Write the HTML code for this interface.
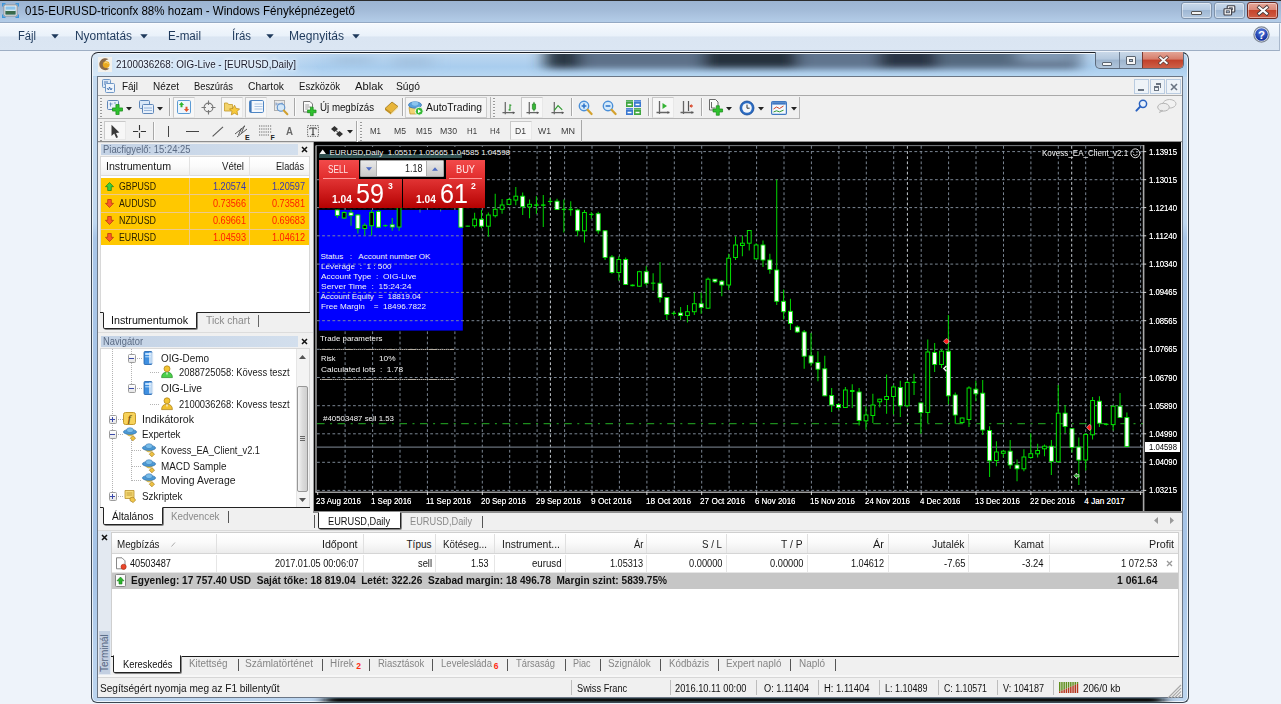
<!DOCTYPE html>
<html><head><meta charset="utf-8"><title>015-EURUSD-triconfx 88% hozam</title>
<style>
html,body{margin:0;padding:0;}
body{width:1281px;height:704px;overflow:hidden;position:relative;background:#eef3fa;font-family:"Liberation Sans",sans-serif;font-size:10px;}
div,svg{box-sizing:border-box;}
svg{position:absolute;overflow:visible;}
</style></head><body>
<div style="position:absolute;left:0px;top:0px;width:1281px;height:23px;background:linear-gradient(#9bb3d1 0%,#a2bad7 40%,#b5cee9 100%);"></div>
<div style="position:absolute;left:0px;top:22px;width:1281px;height:1px;background:#94a9c3;"></div>
<div style="position:absolute;left:0px;top:0px;width:1281px;height:1px;background:#2b2b2b;"></div>
<svg style="left:2px;top:3px" width="17" height="15" viewBox="0 0 17 15"><path d="M0.7 3.5V0.7H3.5 M13.5 0.7H16.3V3.5 M16.3 11.5V14.3H13.5 M3.5 14.3H0.7V11.5" fill="none" stroke="#3f96d9" stroke-width="1.4"/><rect x="2" y="2" width="13" height="11" rx="1.2" fill="#fafafa" stroke="#8c8c8c" stroke-width=".9"/><rect x="3.4" y="3.4" width="10.2" height="8.2" fill="#8cc3ea"/><rect x="3.4" y="7.6" width="10.2" height="4" fill="#3a6a4a"/><rect x="3.4" y="6.6" width="10.2" height="1.4" fill="#d4e9f1"/></svg>
<div style="position:absolute;top:3px;font-size:12px;line-height:16px;color:#000;white-space:pre;left:25px;transform-origin:left center;transform:scaleX(0.9645);">015-EURUSD-triconfx 88% hozam - Windows Fényképnézegető</div>
<div style="position:absolute;left:1181px;top:2px;width:31px;height:17px;background:linear-gradient(#c9d9ea 0%,#b7cbe2 45%,#9fb8d4 50%,#b4c9e0 100%);border:1px solid #7f93ab;border-radius:3px;box-shadow:inset 0 0 0 1px rgba(255,255,255,.45);"></div>
<div style="position:absolute;left:1214px;top:2px;width:31px;height:17px;background:linear-gradient(#c9d9ea 0%,#b7cbe2 45%,#9fb8d4 50%,#b4c9e0 100%);border:1px solid #7f93ab;border-radius:3px;box-shadow:inset 0 0 0 1px rgba(255,255,255,.45);"></div>
<div style="position:absolute;left:1247px;top:2px;width:31px;height:17px;background:linear-gradient(#e5a89a 0%,#d98878 45%,#c6442c 50%,#cf5e46 100%);border:1px solid #6e2a22;border-radius:3px;box-shadow:inset 0 0 0 1px rgba(255,255,255,.45);"></div>
<div style="position:absolute;left:1191px;top:11px;width:11px;height:4px;background:#f4f4f4;border:1px solid #555;border-radius:1px;"></div>
<svg style="left:1223px;top:5px" width="13" height="11" viewBox="0 0 13 11"><rect x="4.2" y="0.8" width="7.6" height="6.2" rx=".8" fill="#f6f6f6" stroke="#3c3c44" stroke-width="1.1"/><rect x="6.4" y="2.8" width="3.2" height="2" fill="#9fb6d2" stroke="#3c3c44" stroke-width=".7"/><rect x="1" y="3.8" width="7.6" height="6.2" rx=".8" fill="#f6f6f6" stroke="#3c3c44" stroke-width="1.1"/><rect x="3.2" y="5.8" width="3.2" height="2" fill="#9fb6d2" stroke="#3c3c44" stroke-width=".7"/></svg>
<svg style="left:1256.6px;top:6px" width="12" height="9" viewBox="0 0 12 9"><path d="M2.2 1.4 L9.8 7.6 M9.8 1.4 L2.2 7.6" stroke="#3f3434" stroke-width="3.6" stroke-linecap="square"/><path d="M2.2 1.4 L9.8 7.6 M9.8 1.4 L2.2 7.6" stroke="#fbfbfb" stroke-width="2.1" stroke-linecap="square"/></svg>
<div style="position:absolute;left:0px;top:23px;width:1279.5px;height:28px;background:linear-gradient(#f5f9fd 0%,#e9f1fa 47%,#dae5f2 49%,#dbe6f3 100%);border-bottom:1px solid #9eaec4;border-top:1px solid #fbfdff;border-right:1px solid #a9b8cc;"></div>
<div style="position:absolute;top:28px;font-size:12px;line-height:16px;color:#1e395b;white-space:pre;left:18px;transform-origin:left center;transform:scaleX(0.9309);">Fájl</div>
<div style="position:absolute;top:28px;font-size:12px;line-height:16px;color:#1e395b;white-space:pre;left:75px;transform-origin:left center;transform:scaleX(0.9939);">Nyomtatás</div>
<div style="position:absolute;top:28px;font-size:12px;line-height:16px;color:#1e395b;white-space:pre;left:168px;transform-origin:left center;transform:scaleX(0.9705);">E-mail</div>
<div style="position:absolute;top:28px;font-size:12px;line-height:16px;color:#1e395b;white-space:pre;left:232px;transform-origin:left center;transform:scaleX(0.9498);">Írás</div>
<div style="position:absolute;top:28px;font-size:12px;line-height:16px;color:#1e395b;white-space:pre;left:289px;transform-origin:left center;transform:scaleX(1.0056);">Megnyitás</div>
<svg style="left:51px;top:34px" width="8" height="5" viewBox="0 0 8 5"><path d="M0.3 0.3 H7.7 L4 4.6 Z" fill="#1e395b"/></svg>
<svg style="left:140px;top:34px" width="8" height="5" viewBox="0 0 8 5"><path d="M0.3 0.3 H7.7 L4 4.6 Z" fill="#1e395b"/></svg>
<svg style="left:266px;top:34px" width="8" height="5" viewBox="0 0 8 5"><path d="M0.3 0.3 H7.7 L4 4.6 Z" fill="#1e395b"/></svg>
<svg style="left:352px;top:34px" width="8" height="5" viewBox="0 0 8 5"><path d="M0.3 0.3 H7.7 L4 4.6 Z" fill="#1e395b"/></svg>
<svg style="left:1253.4px;top:26.4px" width="17" height="17" viewBox="0 0 17 17"><defs><radialGradient id="hg" cx="50%" cy="30%" r="70%"><stop offset="0" stop-color="#5b7fe0"/><stop offset="1" stop-color="#0b2a9a"/></radialGradient></defs><circle cx="8.5" cy="8.5" r="7.6" fill="#eef2f7" stroke="#7c8694" stroke-width="1.2"/><circle cx="8.5" cy="8.5" r="6.3" fill="url(#hg)"/><text x="8.5" y="12.6" text-anchor="middle" font-family="Liberation Sans" font-weight="bold" font-size="11.5" fill="#fff">?</text></svg>
<div style="position:absolute;left:91px;top:52px;width:1098px;height:650.5px;background:linear-gradient(#c6dbf0 0px,#c0d8f0 170px,#a9c6e8 185px,#a6c4e7 520px,#b8d2ee 600px,#bcd5ef 100%);border:1px solid #3c4651;border-top-color:#1c2026;border-radius:7px 7px 6px 6px;box-shadow:inset 0 0 0 1px rgba(255,255,255,.75);"></div>
<svg style="left:93px;top:698px" width="1094" height="4" viewBox="0 0 1094 4"><defs><filter id="bl2" x="-5%" y="-300%" width="110%" height="700%"><feGaussianBlur stdDeviation="7 0.5"/></filter></defs><rect x="232" y="0.2" width="838" height="3.6" fill="#070b10" filter="url(#bl2)"/></svg>
<div style="position:absolute;left:93px;top:54px;width:1094px;height:23px;background:linear-gradient(#bcd6ef 0%,#a9cdee 55%,#b9d8f3 100%);border-radius:5px 5px 0 0;"></div>
<div style="position:absolute;left:93px;top:54px;width:230px;height:22px;background:linear-gradient(90deg,rgba(255,255,255,.45),rgba(255,255,255,.35) 70%,rgba(255,255,255,0));border-radius:5px 0 0 0;"></div>
<svg style="left:93px;top:54px" width="1094" height="23" viewBox="0 0 1094 23"><defs><filter id="bl" x="-20%" y="-100%" width="140%" height="300%"><feGaussianBlur stdDeviation="8 3.2"/></filter><clipPath id="tc"><rect x="0" y="0" width="1094" height="23"/></clipPath></defs><g clip-path="url(#tc)"><g filter="url(#bl)"><rect x="452" y="-6" width="535" height="21" fill="#5d7189"/><rect x="452" y="-6" width="36" height="20" fill="#2b3745"/><rect x="610" y="-6" width="95" height="20" fill="#25303c"/><rect x="705" y="-6" width="75" height="18" fill="#61758e"/><rect x="785" y="-6" width="60" height="20" fill="#2a3644"/><rect x="850" y="-6" width="70" height="18" fill="#55697f"/><rect x="925" y="-6" width="55" height="14" fill="#8098b2"/><rect x="240" y="2" width="40" height="9" fill="#9dbbd8" opacity=".6"/><rect x="300" y="2" width="40" height="12" fill="#9dbbd8" opacity=".6"/></g></g></svg>
<svg style="left:98px;top:57px" width="14" height="15" viewBox="0 0 14 15"><rect width="14" height="15" fill="#f3f1ec"/><path d="M10.5 2.2 A6 6 0 1 0 11.5 11.5 A4.6 4.6 0 1 1 10.5 2.2Z" fill="#8a6a4a"/><circle cx="8.2" cy="7.6" r="3.4" fill="#e9a820"/><path d="M6 6 Q8 4.5 10.5 6.5" stroke="#f8d77a" stroke-width="1" fill="none"/></svg>
<div style="position:absolute;top:57px;font-size:11px;line-height:15px;color:#1b1b2a;white-space:pre;left:116px;transform-origin:left center;transform:scaleX(0.8949);text-shadow:0 0 6px #fff,0 0 4px #fff;">2100036268: OIG-Live - [EURUSD,Daily]</div>
<div style="position:absolute;left:1095px;top:52px;width:89px;height:17px;border:1px solid #5d6b7c;border-top:none;border-radius:0 0 5px 5px;overflow:hidden;background:linear-gradient(#c9d8e8 0%,#b4c8de 45%,#9db4cd 50%,#b0c5db 100%);"></div>
<div style="position:absolute;left:1142px;top:52px;width:41px;height:16px;background:linear-gradient(#e3a596 0%,#d67c6a 45%,#c2402a 50%,#cd6048 100%);border-radius:0 0 4px 0;border-left:1px solid #7a3a30;"></div>
<div style="position:absolute;left:1119px;top:52px;width:1px;height:16px;background:#6f7f93;"></div>
<div style="position:absolute;left:1102px;top:62px;width:10px;height:4px;background:#f6f6f6;border:1px solid #5a6470;border-radius:1px;"></div>
<div style="position:absolute;left:1126px;top:56px;width:10px;height:9px;background:#f6f6f6;border:1px solid #5a6470;border-radius:1px;"></div>
<div style="position:absolute;left:1129px;top:59px;width:4px;height:3px;background:#a9bdd4;border:1px solid #5a6470;"></div>
<svg style="left:1157.6px;top:56px" width="11" height="9" viewBox="0 0 11 9"><path d="M2.2 1.4 L8.8 7.2 M8.8 1.4 L2.2 7.2" stroke="#5a3a36" stroke-width="3.2" stroke-linecap="square"/><path d="M2.2 1.4 L8.8 7.2 M8.8 1.4 L2.2 7.2" stroke="#fafafa" stroke-width="1.8" stroke-linecap="square"/></svg>
<div style="position:absolute;left:97px;top:76px;width:1086px;height:622px;background:#f0f0f0;border:1px solid #6b7685;"></div>
<div style="position:absolute;left:98px;top:77px;width:1084px;height:18px;background:#f0f0f0;"></div>
<div style="position:absolute;left:98px;top:95px;width:1084px;height:1px;background:#a9a9a9;"></div>
<svg style="left:102px;top:79px" width="13" height="14" viewBox="0 0 13 14"><rect x="0.5" y="0.5" width="8" height="8" rx="1" fill="#dbe8f6" stroke="#6f97c6"/><rect x="3.5" y="4.5" width="9" height="9" rx="1" fill="#eef4fb" stroke="#6f97c6"/><path d="M5 9 l1.5 2 l1-3 l1.5 3 l1-2" stroke="#3a6cae" stroke-width=".9" fill="none"/><path d="M2 3 h4 M2 5 h1.5" stroke="#3a6cae" stroke-width=".9"/></svg>
<div style="position:absolute;top:80px;font-size:10px;line-height:13px;color:#141414;white-space:pre;left:122px;transform-origin:left center;transform:scaleX(0.9930);">Fájl</div>
<div style="position:absolute;top:80px;font-size:10px;line-height:13px;color:#141414;white-space:pre;left:153px;transform-origin:left center;transform:scaleX(0.9953);">Nézet</div>
<div style="position:absolute;top:80px;font-size:10px;line-height:13px;color:#141414;white-space:pre;left:194px;transform-origin:left center;transform:scaleX(0.9356);">Beszúrás</div>
<div style="position:absolute;top:80px;font-size:10px;line-height:13px;color:#141414;white-space:pre;left:248px;transform-origin:left center;transform:scaleX(1.0281);">Chartok</div>
<div style="position:absolute;top:80px;font-size:10px;line-height:13px;color:#141414;white-space:pre;left:299px;transform-origin:left center;transform:scaleX(0.9581);">Eszközök</div>
<div style="position:absolute;top:80px;font-size:10px;line-height:13px;color:#141414;white-space:pre;left:355px;transform-origin:left center;transform:scaleX(1.1193);">Ablak</div>
<div style="position:absolute;top:80px;font-size:10px;line-height:13px;color:#141414;white-space:pre;left:396px;transform-origin:left center;transform:scaleX(1.0276);">Súgó</div>
<div style="position:absolute;left:1134px;top:79px;width:15px;height:15px;background:#eef3f8;border:1px solid #b9cbe0;"></div>
<div style="position:absolute;left:1150px;top:79px;width:15px;height:15px;background:#eef3f8;border:1px solid #b9cbe0;"></div>
<div style="position:absolute;left:1166px;top:79px;width:15px;height:15px;background:#eef3f8;border:1px solid #b9cbe0;"></div>
<div style="position:absolute;left:1138px;top:89px;width:6px;height:2px;background:#6a7482;"></div>
<div style="position:absolute;left:1154px;top:86px;width:5px;height:5px;border:1px solid #6a7482;border-top:2px solid #6a7482;"></div>
<div style="position:absolute;left:1156px;top:83px;width:5px;height:5px;border:1px solid #6a7482;border-top:2px solid #6a7482;border-left:none;border-bottom:none;"></div>
<svg style="left:1170px;top:83px" width="8" height="8" viewBox="0 0 8 8"><path d="M1 1 L7 7 M7 1 L1 7" stroke="#6a7482" stroke-width="1.6"/></svg>
<div style="position:absolute;left:98px;top:118px;width:702px;height:1px;background:#b5b5b5;"></div>
<div style="position:absolute;left:799px;top:97px;width:1px;height:21px;background:#b5b5b5;"></div>
<div style="position:absolute;left:98px;top:141px;width:1084px;height:1px;background:#8e8e8e;"></div>
<div style="position:absolute;left:98px;top:142px;width:1084px;height:1px;background:#d9d9d9;"></div>
<div style="position:absolute;left:100px;top:98px;width:3px;height:19px;background-image:repeating-linear-gradient(#9a9a9a 0 1px,#f6f6f6 1px 2px,transparent 2px 3px);width:2px;"></div>
<svg style="left:107px;top:99px" width="16" height="17" viewBox="0 0 16 17"><rect x=".5" y="1.5" width="11" height="9" rx="1" fill="#e8f0fa" stroke="#5e86b8"/><path d="M2.5 5 h3 M3.5 3.5 v4 M7 4 h2" stroke="#5e86b8" stroke-width=".8"/><path d="M8.9 5.5 h3.2 v3.4 h3.4 v3.2 h-3.4 v3.4 h-3.2 v-3.4 h-3.4 v-3.2 h3.4Z" fill="#2fc12f" stroke="#158a15" stroke-width=".7"/></svg>
<svg style="left:126px;top:107px" width="6" height="4" viewBox="0 0 6 4"><path d="M0 0 H6 L3 3.5Z" fill="#222"/></svg>
<svg style="left:139px;top:99px" width="16" height="17" viewBox="0 0 16 17"><rect x=".5" y="1.5" width="10" height="8" rx="1" fill="#d9e7f7" stroke="#5e86b8"/><rect x="3.5" y="5.5" width="11" height="9" rx="1" fill="#e6effa" stroke="#5e86b8"/><path d="M5 9 h8 M5 11.5 h8" stroke="#7fa3d0" stroke-width=".8"/></svg>
<svg style="left:157px;top:107px" width="6" height="4" viewBox="0 0 6 4"><path d="M0 0 H6 L3 3.5Z" fill="#222"/></svg>
<div style="position:absolute;left:169px;top:98px;width:1px;height:18px;background:#a8a8a8;"></div><div style="position:absolute;left:170px;top:98px;width:1px;height:18px;background:#fbfbfb;"></div>
<div style="position:absolute;left:173px;top:97px;width:22px;height:21px;background:#f7f7f7;border:1px solid #c9c9c9;border-right-color:#e8e8e8;border-bottom-color:#e8e8e8;"></div>
<svg style="left:177px;top:100px" width="14" height="14" viewBox="0 0 14 14"><rect x=".5" y=".5" width="13" height="13" rx="1.2" fill="#eef5fc" stroke="#5b9bd5"/><path d="M4.5 2 l2.6 3 h-1.6 v2.2 h-2 v-2.2 h-1.6Z" fill="#2fb52f"/><path d="M9.5 12 l-2.6 -3 h1.6 v-2.2 h2 v2.2 h1.6Z" fill="#e2552b"/></svg>
<svg style="left:201px;top:100px" width="15" height="15" viewBox="0 0 15 15"><circle cx="7.5" cy="7.5" r="4.4" fill="none" stroke="#777" stroke-width="1.1"/><path d="M7.5 .5 v4.5 M7.5 10 v4.5 M.5 7.5 h4.5 M10 7.5 h4.5" stroke="#777" stroke-width="1.1"/></svg>
<div style="position:absolute;left:221px;top:97px;width:22px;height:21px;background:#f7f7f7;border:1px solid #c9c9c9;border-right-color:#e8e8e8;border-bottom-color:#e8e8e8;"></div>
<svg style="left:224px;top:100px" width="17" height="16" viewBox="0 0 17 16"><path d="M.5 3 v8 h8 v-6.5 h-4 l-1-1.5Z" fill="#f3d36b" stroke="#c49a2a" stroke-width=".8"/><path d="M10.5 5.2 l1.6 3.2 3.5.5 -2.5 2.5.6 3.5 -3.2-1.7 -3.2 1.7.6-3.5 -2.5-2.5 3.5-.5Z" fill="#f7c93c" stroke="#b98a1e" stroke-width=".7"/></svg>
<div style="position:absolute;left:245px;top:97px;width:22px;height:21px;background:#f7f7f7;border:1px solid #c9c9c9;border-right-color:#e8e8e8;border-bottom-color:#e8e8e8;"></div>
<svg style="left:249px;top:100px" width="15" height="14" viewBox="0 0 15 14"><rect x=".5" y=".5" width="14" height="12" rx="1.2" fill="#f4f8fd" stroke="#4f86c4"/><rect x="1" y="1" width="1.6" height="11" fill="#3f78ba"/><path d="M5.5 4 h8 M5.5 6.5 h8 M5.5 9 h8" stroke="#9db9dc" stroke-width=".8"/></svg>
<svg style="left:273px;top:99px" width="16" height="17" viewBox="0 0 16 17"><rect x="1.5" y="1.5" width="10" height="10" fill="#e8e8e8" stroke="#a0a0a0" stroke-width=".8"/><path d="M3 5 h7 M3 3.5 v3 M9 3.5 v3" stroke="#6e8fbf" stroke-width=".8"/><circle cx="8" cy="8.5" r="3.8" fill="#cfe6fa" fill-opacity=".85" stroke="#5a8fcb" stroke-width="1.1"/><path d="M10.8 11.5 l3.6 3.8" stroke="#d0a030" stroke-width="2" stroke-linecap="round"/></svg>
<div style="position:absolute;left:294px;top:98px;width:1px;height:18px;background:#a8a8a8;"></div><div style="position:absolute;left:295px;top:98px;width:1px;height:18px;background:#fbfbfb;"></div>
<svg style="left:302px;top:100.5px" width="15" height="17" viewBox="0 0 15 17"><path d="M1.5 .5 h6.5 l2.5 2.5 v8 h-9Z" fill="#fbfbfb" stroke="#6a6a6a" stroke-width=".9"/><path d="M3.2 4 h4 M3.2 6 h6 M3.2 8 h3" stroke="#8a8a8a" stroke-width=".8"/><path d="M8.440000000000001 6.15 h2.72 v2.8899999999999997 h2.8899999999999997 v2.72 h-2.8899999999999997 v2.8899999999999997 h-2.72 v-2.8899999999999997 h-2.8899999999999997 v-2.72 h2.8899999999999997Z" fill="#2fc12f" stroke="#158a15" stroke-width=".7"/></svg>
<div style="position:absolute;top:100px;font-size:10.5px;line-height:14px;color:#111;white-space:pre;left:320px;transform-origin:left center;transform:scaleX(0.9254);">Új megbízás</div>
<svg style="left:384px;top:100px" width="15" height="15" viewBox="0 0 15 15"><path d="M1 8.5 L8 2 L14 6.5 L7 13Z" fill="#e8b53a" stroke="#9c7418" stroke-width=".8"/><path d="M1 8.5 L7 13 L7 14.5 L1 10Z" fill="#c08e1c"/><path d="M7 13 L14 6.5 L14 8 L7 14.5Z" fill="#f2d78a"/></svg>
<div style="position:absolute;left:402px;top:98px;width:1px;height:18px;background:#a8a8a8;"></div><div style="position:absolute;left:403px;top:98px;width:1px;height:18px;background:#fbfbfb;"></div>
<div style="position:absolute;left:405px;top:97px;width:82px;height:21px;background:#f5f5f5;border:1px solid #cdcdcd;"></div>
<svg style="left:408px;top:100px" width="16" height="16" viewBox="0 0 16 16"><path d="M1 7.5 h12 l-1 6.5 h-10Z" fill="#f1d271" stroke="#b9922a" stroke-width=".7"/><ellipse cx="7" cy="5" rx="6.5" ry="3.2" fill="#5aa0dc" stroke="#2f6fb0" stroke-width=".7"/><ellipse cx="7" cy="3.6" rx="3.3" ry="2.1" fill="#8cc4ee"/><circle cx="11.2" cy="11.2" r="4" fill="#35b835" stroke="#fff" stroke-width=".9"/><path d="M10 9.2 l3 2 -3 2Z" fill="#fff"/></svg>
<div style="position:absolute;top:100px;font-size:10.5px;line-height:14px;color:#111;white-space:pre;left:426px;transform-origin:left center;transform:scaleX(0.9857);">AutoTrading</div>
<div style="position:absolute;left:489.5px;top:97px;width:1px;height:21px;background:#b5b5b5;"></div>
<div style="position:absolute;left:493px;top:98px;width:3px;height:19px;background-image:repeating-linear-gradient(#9a9a9a 0 1px,#f6f6f6 1px 2px,transparent 2px 3px);width:2px;"></div>
<svg style="left:502px;top:101px" width="15" height="15" viewBox="0 0 16 16"><path d="M3.5 1 v13 M.5 12.5 h13" stroke="#666" stroke-width="1.3"/><path d="M11.5 11 l2 1.5 -2 1.5Z" fill="#555"/><path d="M8.5 3.5 v7 M7 9.5 h1.5 M8.5 4.5 h1.5" stroke="#2e9a2e" stroke-width="1.2"/></svg>
<div style="position:absolute;left:521px;top:97px;width:22px;height:21px;background:#f7f7f7;border:1px solid #c9c9c9;border-right-color:#e8e8e8;border-bottom-color:#e8e8e8;"></div>
<svg style="left:526px;top:101px" width="15" height="15" viewBox="0 0 16 16"><path d="M3.5 1 v13 M.5 12.5 h13" stroke="#666" stroke-width="1.3"/><path d="M11.5 11 l2 1.5 -2 1.5Z" fill="#555"/><path d="M8.5 1 v10" stroke="#1d7a1d" stroke-width="1"/><rect x="6.8" y="3" width="3.4" height="6" rx=".8" fill="#38b838" stroke="#1d7a1d" stroke-width=".7"/></svg>
<svg style="left:550.5px;top:101px" width="15" height="15" viewBox="0 0 16 16"><path d="M3.5 1 v13 M.5 12.5 h13" stroke="#666" stroke-width="1.3"/><path d="M11.5 11 l2 1.5 -2 1.5Z" fill="#555"/><path d="M3.5 10 L7.5 5 L12 9.5" stroke="#2e9a2e" stroke-width="1.2" fill="none"/></svg>
<div style="position:absolute;left:571px;top:98px;width:1px;height:18px;background:#a8a8a8;"></div><div style="position:absolute;left:572px;top:98px;width:1px;height:18px;background:#fbfbfb;"></div>
<svg style="left:578px;top:100px" width="15" height="16" viewBox="0 0 15 16"><circle cx="6" cy="6" r="4.7" fill="#d6ebfb" stroke="#4a8fd8" stroke-width="1.4"/><path d="M9.6 9.8 l4 4.2" stroke="#d3a12e" stroke-width="2.2" stroke-linecap="round"/><path d="M3.6 6 h4.8" stroke="#2a72c8" stroke-width="1.5"/><path d="M6 3.6 v4.8" stroke="#2a72c8" stroke-width="1.5"/></svg>
<svg style="left:602px;top:100px" width="15" height="16" viewBox="0 0 15 16"><circle cx="6" cy="6" r="4.7" fill="#d6ebfb" stroke="#4a8fd8" stroke-width="1.4"/><path d="M9.6 9.8 l4 4.2" stroke="#d3a12e" stroke-width="2.2" stroke-linecap="round"/><path d="M3.6 6 h4.8" stroke="#2a72c8" stroke-width="1.5"/></svg>
<svg style="left:626px;top:100px" width="15" height="15" viewBox="0 0 15 15"><rect x="0" y="0" width="7" height="7" fill="#3fa63f"/><rect x="8" y="0" width="7" height="7" fill="#3b78d0"/><rect x="0" y="8" width="7" height="7" fill="#3b78d0"/><rect x="8" y="8" width="7" height="7" fill="#3fa63f"/><path d="M1.5 4.5 h4 M9.5 4.5 h4 M1.5 12.5 h4 M9.5 12.5 h4" stroke="#fff" stroke-width="1.6"/><path d="M0 1.2 h7 M8 1.2 h7 M0 9.2 h7 M8 9.2 h7" stroke="#cfe0f5" stroke-width=".9" opacity=".6"/></svg>
<div style="position:absolute;left:648px;top:98px;width:1px;height:18px;background:#a8a8a8;"></div><div style="position:absolute;left:649px;top:98px;width:1px;height:18px;background:#fbfbfb;"></div>
<div style="position:absolute;left:652px;top:97px;width:22px;height:21px;background:#f7f7f7;border:1px solid #c9c9c9;border-right-color:#e8e8e8;border-bottom-color:#e8e8e8;"></div>
<svg style="left:656px;top:100px" width="16" height="16" viewBox="0 0 16 16"><path d="M3.5 1 v13 M.5 12.5 h13" stroke="#666" stroke-width="1.3"/><path d="M11.5 11 l2 1.5 -2 1.5Z" fill="#555"/><path d="M6.5 3 l4.5 3 -4.5 3Z" fill="#35b335"/></svg>
<svg style="left:680px;top:100px" width="16" height="16" viewBox="0 0 16 16"><path d="M3.5 1 v13 M.5 12.5 h13" stroke="#666" stroke-width="1.3"/><path d="M11.5 11 l2 1.5 -2 1.5Z" fill="#555"/><path d="M8.5 1 v10" stroke="#555" stroke-width="1.2"/><path d="M13 6 h-3" stroke="#d8482a" stroke-width="1.2"/><path d="M9.3 6 l2.4 -2 v4Z" fill="#d8482a"/></svg>
<div style="position:absolute;left:701px;top:98px;width:1px;height:18px;background:#a8a8a8;"></div><div style="position:absolute;left:702px;top:98px;width:1px;height:18px;background:#fbfbfb;"></div>
<svg style="left:708px;top:99px" width="16" height="17" viewBox="0 0 16 17"><path d="M1.5 .5 h6 l2.5 2.5 v8 h-8.5Z" fill="#fbfbfb" stroke="#5a5a5a" stroke-width=".9"/><path d="M3.5 3 v6 h4" stroke="#5a5a5a" stroke-width=".9" fill="none"/><path d="M8.280000000000001 6.75 h3.04 v3.23 h3.23 v3.04 h-3.23 v3.23 h-3.04 v-3.23 h-3.23 v-3.04 h3.23Z" fill="#2fc12f" stroke="#158a15" stroke-width=".7"/></svg>
<svg style="left:726px;top:107px" width="6" height="4" viewBox="0 0 6 4"><path d="M0 0 H6 L3 3.5Z" fill="#222"/></svg>
<svg style="left:739px;top:100px" width="16" height="16" viewBox="0 0 16 16"><circle cx="8" cy="8" r="7" fill="#2a6cc4" stroke="#174a96" stroke-width=".8"/><circle cx="8" cy="8" r="4.8" fill="#f2f6fb"/><path d="M8 4.6 v3.6 h2.6" stroke="#333" stroke-width="1" fill="none"/></svg>
<svg style="left:758px;top:107px" width="6" height="4" viewBox="0 0 6 4"><path d="M0 0 H6 L3 3.5Z" fill="#222"/></svg>
<svg style="left:771px;top:101px" width="16" height="14" viewBox="0 0 16 14"><rect x=".6" y=".6" width="14.8" height="12.8" rx="1.2" fill="#f4f8fd" stroke="#3f78c2" stroke-width="1.2"/><rect x="1.2" y="1.2" width="13.6" height="2.4" fill="#3f78c2"/><path d="M2.5 8 l3-2 3 1.5 4-2.5" stroke="#d0462a" stroke-width="1" fill="none"/><path d="M2.5 11 l3-1.2 3 1 4-1.6" stroke="#2e9a2e" stroke-width="1" fill="none"/></svg>
<svg style="left:791px;top:107px" width="6" height="4" viewBox="0 0 6 4"><path d="M0 0 H6 L3 3.5Z" fill="#222"/></svg>
<svg style="left:1135px;top:99px" width="13" height="13" viewBox="0 0 13 13"><circle cx="8" cy="4.8" r="3.6" fill="#e8f1fc" stroke="#2a62c0" stroke-width="1.5"/><path d="M5.4 7.4 l-4 4.2" stroke="#2a62c0" stroke-width="2" stroke-linecap="round"/></svg>
<svg style="left:1157px;top:99px" width="20" height="14" viewBox="0 0 20 14"><ellipse cx="12.5" cy="4.8" rx="6.5" ry="4.3" fill="#f2f2f2" stroke="#b4b4b4" stroke-width=".9"/><ellipse cx="6.5" cy="8.2" rx="5.8" ry="3.9" fill="#ececec" stroke="#aaa" stroke-width=".9"/><path d="M4 11.2 l-1.6 2.4 3.4 -1.8Z" fill="#ececec" stroke="#aaa" stroke-width=".7"/></svg>
<div style="position:absolute;left:100px;top:121.8px;width:3px;height:19px;background-image:repeating-linear-gradient(#9a9a9a 0 1px,#f6f6f6 1px 2px,transparent 2px 3px);width:2px;"></div>
<div style="position:absolute;left:104px;top:120.8px;width:22px;height:19.6px;background:#f7f7f7;border:1px solid #c9c9c9;border-right-color:#e8e8e8;border-bottom-color:#e8e8e8;"></div>
<svg style="left:110px;top:123.8px" width="10" height="15" viewBox="0 0 10 15"><path d="M1.5 .8 v11.2 l2.7-2.4 2 4.4 1.8-.8 -2-4.3 3.4-.3Z" fill="#3a3a3a"/></svg>
<svg style="left:133px;top:124.8px" width="13" height="13" viewBox="0 0 13 13"><path d="M6.5 0 v5.2 M6.5 7.8 v5.2 M0 6.5 h5.2 M7.8 6.5 h5.2" stroke="#333" stroke-width="1.1"/></svg>
<div style="position:absolute;left:153px;top:121.8px;width:1px;height:18px;background:#a8a8a8;"></div><div style="position:absolute;left:154px;top:121.8px;width:1px;height:18px;background:#fbfbfb;"></div>
<div style="position:absolute;left:168px;top:125.8px;width:1px;height:11px;background:#444;"></div>
<div style="position:absolute;left:186px;top:130.8px;width:13px;height:1px;background:#444;"></div>
<svg style="left:212px;top:125.8px" width="12" height="11" viewBox="0 0 12 11"><path d="M.6 10.4 L11 .8" stroke="#555" stroke-width="1.1"/></svg>
<svg style="left:233.5px;top:123.8px" width="16" height="16" viewBox="0 0 16 16"><path d="M1 10 L11 2 M3 13 L13 5 M4.5 11 l3-7 M7.5 8.6 l3-7" stroke="#555" stroke-width="1"/><text x="11" y="15.5" font-size="7" font-family="Liberation Sans" font-weight="bold" fill="#222">E</text></svg>
<svg style="left:258.5px;top:123.8px" width="17" height="16" viewBox="0 0 17 16"><path d="M0 2 h13 M0 5 h13 M0 8 h13 M0 11 h10" stroke="#666" stroke-width="1" stroke-dasharray="1.2 1"/><text x="11.5" y="15.5" font-size="7" font-family="Liberation Sans" font-weight="bold" fill="#222">F</text></svg>
<div style="position:absolute;top:125.3px;font-size:10px;line-height:13px;color:#6a6a6a;white-space:pre;font-weight:bold;left:285.5px;transform-origin:left center;transform:scaleX(0.9693);">A</div>
<svg style="left:306.5px;top:125.3px" width="12" height="12" viewBox="0 0 12 12"><rect x=".6" y=".6" width="10.8" height="10.8" fill="none" stroke="#555" stroke-width=".9" stroke-dasharray="1.3 1.1"/><path d="M2.8 3 h6.4 M6 3 v6.6 M4.6 9.6 h2.8 M2.8 3 v1.3 M9.2 3 v1.3" stroke="#444" stroke-width="1.2"/></svg>
<svg style="left:330px;top:124.8px" width="14" height="13" viewBox="0 0 14 13"><path d="M1 4 l3.5-3 3.5 3 -3.5 3Z M6 9 l3.5-3 3.5 3 -3.5 3Z" fill="#333"/><path d="M3 3 L11 10" stroke="#333" stroke-width=".9"/></svg>
<svg style="left:347px;top:129.8px" width="6" height="4" viewBox="0 0 6 4"><path d="M0 0 H6 L3 3.5Z" fill="#222"/></svg>
<div style="position:absolute;left:356px;top:120.8px;width:1px;height:21px;background:#a8a8a8;"></div>
<div style="position:absolute;left:357px;top:120.8px;width:1px;height:21px;background:#fbfbfb;"></div>
<div style="position:absolute;left:360px;top:121.8px;width:3px;height:19px;background-image:repeating-linear-gradient(#9a9a9a 0 1px,#f6f6f6 1px 2px,transparent 2px 3px);width:2px;"></div>
<div style="position:absolute;top:125.8px;font-size:8.5px;line-height:11px;color:#3c3c3c;white-space:pre;left:370px;transform-origin:left center;transform:scaleX(0.9316);">M1</div>
<div style="position:absolute;top:125.8px;font-size:8.5px;line-height:11px;color:#3c3c3c;white-space:pre;left:394px;transform-origin:left center;transform:scaleX(1.0163);">M5</div>
<div style="position:absolute;top:125.8px;font-size:8.5px;line-height:11px;color:#3c3c3c;white-space:pre;left:416px;transform-origin:left center;transform:scaleX(0.9676);">M15</div>
<div style="position:absolute;top:125.8px;font-size:8.5px;line-height:11px;color:#3c3c3c;white-space:pre;left:440px;transform-origin:left center;transform:scaleX(1.0281);">M30</div>
<div style="position:absolute;top:125.8px;font-size:8.5px;line-height:11px;color:#3c3c3c;white-space:pre;left:467px;transform-origin:left center;transform:scaleX(0.9203);">H1</div>
<div style="position:absolute;top:125.8px;font-size:8.5px;line-height:11px;color:#3c3c3c;white-space:pre;left:490px;transform-origin:left center;transform:scaleX(0.9203);">H4</div>
<div style="position:absolute;top:125.8px;font-size:8.5px;line-height:11px;color:#3c3c3c;white-space:pre;left:538px;transform-origin:left center;transform:scaleX(1.0196);">W1</div>
<div style="position:absolute;top:125.8px;font-size:8.5px;line-height:11px;color:#3c3c3c;white-space:pre;left:561px;transform-origin:left center;transform:scaleX(1.0591);">MN</div>
<div style="position:absolute;left:510px;top:120.8px;width:22px;height:19.6px;background:#f7f7f7;border:1px solid #c9c9c9;border-right-color:#e8e8e8;border-bottom-color:#e8e8e8;"></div>
<div style="position:absolute;top:125.8px;font-size:8.5px;line-height:11px;color:#3c3c3c;white-space:pre;left:515px;transform-origin:left center;transform:scaleX(1.0124);">D1</div>
<div style="position:absolute;left:581px;top:119.8px;width:1px;height:22px;background:#a8a8a8;"></div>
<div style="position:absolute;left:98px;top:143px;width:215px;height:189px;background:#f0f0f0;"></div>
<div style="position:absolute;left:101px;top:144px;width:197px;height:11px;background:linear-gradient(90deg,#c3d2e5,#d3dfed);"></div>
<div style="position:absolute;top:142.6px;font-size:10px;line-height:13px;color:#5b6b84;white-space:pre;left:102.6px;transform-origin:left center;transform:scaleX(0.9425);">Piacfigyelő: 15:24:25</div>
<svg style="left:301px;top:146px" width="7" height="7" viewBox="0 0 7 7"><path d="M1 1 L6 6 M6 1 L1 6" stroke="#111" stroke-width="1.5"/></svg>
<div style="position:absolute;left:100px;top:156px;width:210px;height:157px;background:#fff;border:1px solid #d8d8d8;border-bottom:none;"></div>
<div style="position:absolute;left:101px;top:157px;width:208px;height:19px;background:linear-gradient(#ffffff 0%,#fbfbfb 50%,#efefef 100%);border-bottom:1px solid #dcdcdc;"></div>
<div style="position:absolute;left:189px;top:157px;width:1px;height:19px;background:#e2e2e2;"></div>
<div style="position:absolute;left:249px;top:157px;width:1px;height:19px;background:#e2e2e2;"></div>
<div style="position:absolute;top:160px;font-size:10px;line-height:13px;color:#1a1a1a;white-space:pre;left:106px;transform-origin:left center;transform:scaleX(1.0633);">Instrumentum</div>
<div style="position:absolute;top:160px;font-size:10px;line-height:13px;color:#1a1a1a;white-space:pre;left:222px;transform-origin:left center;transform:scaleX(0.9652);">Vétel</div>
<div style="position:absolute;top:160px;font-size:10px;line-height:13px;color:#1a1a1a;white-space:pre;left:276px;transform-origin:left center;transform:scaleX(0.9157);">Eladás</div>
<div style="position:absolute;left:101px;top:177.8px;width:208px;height:67.7px;background:#ffc800;"></div>
<svg style="left:105px;top:182px" width="9" height="9" viewBox="0 0 9 9"><path d="M4.5 .5 L8.5 4.7 H6.3 V8.5 H2.7 V4.7 H.5Z" fill="#3fcf3f" stroke="#1f8a1f" stroke-width=".8"/></svg>
<div style="position:absolute;top:180px;font-size:10px;line-height:13px;color:#2a2000;white-space:pre;left:119px;transform-origin:left center;transform:scaleX(0.8761);">GBPUSD</div>
<div style="position:absolute;top:180px;font-size:10px;line-height:13px;color:#3838b0;white-space:pre;left:212.5px;transform-origin:left center;transform:scaleX(0.9129);">1.20574</div>
<div style="position:absolute;top:180px;font-size:10px;line-height:13px;color:#3838b0;white-space:pre;left:272px;transform-origin:left center;transform:scaleX(0.9129);">1.20597</div>
<div style="position:absolute;left:101px;top:194.4px;width:208px;height:1px;background:#ecc98c;"></div>
<svg style="left:105px;top:199px" width="9" height="9" viewBox="0 0 9 9"><path d="M4.5 8.5 L8.5 4.3 H6.3 V.5 H2.7 V4.3 H.5Z" fill="#ff5a2a" stroke="#b83a10" stroke-width=".8"/></svg>
<div style="position:absolute;top:197px;font-size:10px;line-height:13px;color:#2a2000;white-space:pre;left:119px;transform-origin:left center;transform:scaleX(0.8762);">AUDUSD</div>
<div style="position:absolute;top:197px;font-size:10px;line-height:13px;color:#ff2000;white-space:pre;left:212.5px;transform-origin:left center;transform:scaleX(0.9129);">0.73566</div>
<div style="position:absolute;top:197px;font-size:10px;line-height:13px;color:#ff2000;white-space:pre;left:272px;transform-origin:left center;transform:scaleX(0.9129);">0.73581</div>
<div style="position:absolute;left:101px;top:211.70000000000002px;width:208px;height:1px;background:#ecc98c;"></div>
<svg style="left:105px;top:216.3px" width="9" height="9" viewBox="0 0 9 9"><path d="M4.5 8.5 L8.5 4.3 H6.3 V.5 H2.7 V4.3 H.5Z" fill="#ff5a2a" stroke="#b83a10" stroke-width=".8"/></svg>
<div style="position:absolute;top:214.3px;font-size:10px;line-height:13px;color:#2a2000;white-space:pre;left:119px;transform-origin:left center;transform:scaleX(0.8880);">NZDUSD</div>
<div style="position:absolute;top:214.3px;font-size:10px;line-height:13px;color:#ff2000;white-space:pre;left:212.5px;transform-origin:left center;transform:scaleX(0.9129);">0.69661</div>
<div style="position:absolute;top:214.3px;font-size:10px;line-height:13px;color:#ff2000;white-space:pre;left:272px;transform-origin:left center;transform:scaleX(0.9129);">0.69683</div>
<div style="position:absolute;left:101px;top:228.8px;width:208px;height:1px;background:#ecc98c;"></div>
<svg style="left:105px;top:233.4px" width="9" height="9" viewBox="0 0 9 9"><path d="M4.5 8.5 L8.5 4.3 H6.3 V.5 H2.7 V4.3 H.5Z" fill="#ff5a2a" stroke="#b83a10" stroke-width=".8"/></svg>
<div style="position:absolute;top:231.4px;font-size:10px;line-height:13px;color:#2a2000;white-space:pre;left:119px;transform-origin:left center;transform:scaleX(0.8762);">EURUSD</div>
<div style="position:absolute;top:231.4px;font-size:10px;line-height:13px;color:#ff2000;white-space:pre;left:212.5px;transform-origin:left center;transform:scaleX(0.9129);">1.04593</div>
<div style="position:absolute;top:231.4px;font-size:10px;line-height:13px;color:#ff2000;white-space:pre;left:272px;transform-origin:left center;transform:scaleX(0.9129);">1.04612</div>
<div style="position:absolute;left:189px;top:177.8px;width:1px;height:67.7px;background:#ecc98c;"></div>
<div style="position:absolute;left:249px;top:177.8px;width:1px;height:67.7px;background:#ecc98c;"></div>
<div style="position:absolute;left:100px;top:312px;width:210px;height:1px;background:#222;"></div>
<div style="position:absolute;left:103px;top:312px;width:94px;height:17px;background:#fff;border:1px solid #222;border-top:1px solid #fff;border-radius:0 0 2px 2px;box-shadow:1px 1px 0 #888;"></div>
<div style="position:absolute;top:314px;font-size:10px;line-height:13px;color:#111;white-space:pre;left:111px;transform-origin:left center;transform:scaleX(1.0740);">Instrumentumok</div>
<div style="position:absolute;top:314px;font-size:10px;line-height:13px;color:#8a8a8a;white-space:pre;left:205.5px;transform-origin:left center;transform:scaleX(1.0240);">Tick chart</div>
<div style="position:absolute;left:258px;top:315px;width:1px;height:12px;background:#666;"></div>
<div style="position:absolute;left:98px;top:333px;width:215px;height:197px;background:#f0f0f0;"></div>
<div style="position:absolute;left:98px;top:332px;width:215px;height:1px;background:#dcdcdc;"></div>
<div style="position:absolute;left:101px;top:336px;width:197px;height:11px;background:linear-gradient(90deg,#c3d2e5,#d3dfed);"></div>
<div style="position:absolute;top:334.8px;font-size:10px;line-height:13px;color:#5b6b84;white-space:pre;left:102.6px;transform-origin:left center;transform:scaleX(0.9346);">Navigátor</div>
<svg style="left:301px;top:338px" width="7" height="7" viewBox="0 0 7 7"><path d="M1 1 L6 6 M6 1 L1 6" stroke="#111" stroke-width="1.5"/></svg>
<div style="position:absolute;left:100px;top:348px;width:210px;height:160px;background:#fff;border:1px solid #d8d8d8;border-bottom:none;"></div>
<div style="position:absolute;left:296px;top:349px;width:13px;height:158px;background:#f3f3f3;border-left:1px solid #e6e6e6;"></div>
<div style="position:absolute;left:297px;top:386px;width:11px;height:106px;background:linear-gradient(90deg,#f4f4f4,#dcdcdc 50%,#cfcfcf);border:1px solid #979797;border-radius:2px;"></div>
<div style="position:absolute;left:300px;top:436px;width:5px;height:1px;background:#666;"></div><div style="position:absolute;left:300px;top:438px;width:5px;height:1px;background:#666;"></div><div style="position:absolute;left:300px;top:440px;width:5px;height:1px;background:#666;"></div>
<svg style="left:299px;top:355px" width="7" height="4" viewBox="0 0 7 4"><path d="M0 4 L3.5 0 L7 4Z" fill="#555"/></svg>
<svg style="left:299px;top:498px" width="7" height="4" viewBox="0 0 7 4"><path d="M0 0 L3.5 4 L7 0Z" fill="#555"/></svg>
<div style="position:absolute;left:112px;top:349px;width:1px;height:148px;background-image:repeating-linear-gradient(#b4b4b4 0 1px,transparent 1px 2px);"></div>
<div style="position:absolute;left:131px;top:349px;width:1px;height:40px;background-image:repeating-linear-gradient(#b4b4b4 0 1px,transparent 1px 2px);"></div>
<div style="position:absolute;left:131px;top:440px;width:1px;height:41px;background-image:repeating-linear-gradient(#b4b4b4 0 1px,transparent 1px 2px);"></div>
<div style="position:absolute;left:131px;top:358px;width:11px;height:1px;background-image:repeating-linear-gradient(90deg,#b4b4b4 0 1px,transparent 1px 2px);"></div>
<div style="position:absolute;left:127.6px;top:354.4px;width:8.4px;height:8.4px;background:linear-gradient(#fff,#e6e6e6);border:1px solid #9c9c9c;border-radius:1.5px;"></div><div style="position:absolute;left:129px;top:358px;width:5px;height:1px;background:#3c4aa8;"></div>
<svg style="left:143px;top:351px" width="11" height="14" viewBox="0 0 11 14"><rect x="1" y=".5" width="8" height="13" rx="1" fill="#3f8fe0" stroke="#1f5fa8" stroke-width=".8"/><rect x="2.2" y="2" width="5.6" height="2" fill="#bfe0ff"/><rect x="2.2" y="5" width="5.6" height="1.4" fill="#9ccbf5"/><rect x="6" y="1.5" width="4.5" height="11" fill="#e9f3fc" opacity=".75"/></svg>
<div style="position:absolute;top:352px;font-size:10px;line-height:13px;color:#1a1a1a;white-space:pre;left:161px;transform-origin:left center;transform:scaleX(0.9930);">OIG-Demo</div>
<div style="position:absolute;left:150px;top:372px;width:10px;height:1px;background-image:repeating-linear-gradient(90deg,#b4b4b4 0 1px,transparent 1px 2px);"></div>
<svg style="left:161px;top:365px" width="12" height="13" viewBox="0 0 12 13"><path d="M.6 12.6 q0-5.4 5.4-5.4 q5.4 0 5.4 5.4Z" fill="#4bd04b" stroke="#1f8a1f" stroke-width=".7"/><circle cx="6" cy="3.8" r="3" fill="#f3c433" stroke="#a97c10" stroke-width=".7"/><path d="M5 7.4 l1 3 1-3Z" fill="#fff" opacity=".8"/></svg>
<div style="position:absolute;top:366px;font-size:10px;line-height:13px;color:#1a1a1a;white-space:pre;left:178.5px;transform-origin:left center;transform:scaleX(0.9375);">2088725058: Kövess teszt</div>
<div style="position:absolute;left:131px;top:388px;width:11px;height:1px;background-image:repeating-linear-gradient(90deg,#b4b4b4 0 1px,transparent 1px 2px);"></div>
<div style="position:absolute;left:127.6px;top:384.4px;width:8.4px;height:8.4px;background:linear-gradient(#fff,#e6e6e6);border:1px solid #9c9c9c;border-radius:1.5px;"></div><div style="position:absolute;left:129px;top:388px;width:5px;height:1px;background:#3c4aa8;"></div>
<svg style="left:143px;top:381px" width="11" height="14" viewBox="0 0 11 14"><rect x="1" y=".5" width="8" height="13" rx="1" fill="#3f8fe0" stroke="#1f5fa8" stroke-width=".8"/><rect x="2.2" y="2" width="5.6" height="2" fill="#bfe0ff"/><rect x="2.2" y="5" width="5.6" height="1.4" fill="#9ccbf5"/><rect x="6" y="1.5" width="4.5" height="11" fill="#e9f3fc" opacity=".75"/></svg>
<div style="position:absolute;top:382px;font-size:10px;line-height:13px;color:#1a1a1a;white-space:pre;left:161px;transform-origin:left center;transform:scaleX(1.0247);">OIG-Live</div>
<div style="position:absolute;left:150px;top:404px;width:10px;height:1px;background-image:repeating-linear-gradient(90deg,#b4b4b4 0 1px,transparent 1px 2px);"></div>
<svg style="left:161px;top:397px" width="12" height="13" viewBox="0 0 12 13"><path d="M.6 12.6 q0-5.4 5.4-5.4 q5.4 0 5.4 5.4Z" fill="#f0c030" stroke="#a97c10" stroke-width=".7"/><circle cx="6" cy="3.8" r="3" fill="#f3c433" stroke="#a97c10" stroke-width=".7"/><path d="M5 7.4 l1 3 1-3Z" fill="#fff" opacity=".8"/></svg>
<div style="position:absolute;top:398px;font-size:10px;line-height:13px;color:#1a1a1a;white-space:pre;left:178.5px;transform-origin:left center;transform:scaleX(0.9375);">2100036268: Kovess teszt</div>
<div style="position:absolute;left:112px;top:419px;width:11px;height:1px;background-image:repeating-linear-gradient(90deg,#b4b4b4 0 1px,transparent 1px 2px);"></div>
<div style="position:absolute;left:108.6px;top:415.4px;width:8.4px;height:8.4px;background:linear-gradient(#fff,#e6e6e6);border:1px solid #9c9c9c;border-radius:1.5px;"></div><div style="position:absolute;left:110px;top:419px;width:5px;height:1px;background:#3c4aa8;"></div><div style="position:absolute;left:112px;top:417px;width:1px;height:5px;background:#3c4aa8;"></div>
<svg style="left:123px;top:412px" width="13" height="13" viewBox="0 0 13 13"><rect x=".5" y=".5" width="12" height="12" rx="2" fill="#f7d25a" stroke="#c49a2a"/><text x="6.5" y="10" text-anchor="middle" font-family="Liberation Serif" font-style="italic" font-weight="bold" font-size="10" fill="#7a5a10">f</text></svg>
<div style="position:absolute;top:413px;font-size:10px;line-height:13px;color:#1a1a1a;white-space:pre;left:142px;transform-origin:left center;transform:scaleX(1.0630);">Indikátorok</div>
<div style="position:absolute;left:112px;top:434px;width:11px;height:1px;background-image:repeating-linear-gradient(90deg,#b4b4b4 0 1px,transparent 1px 2px);"></div>
<div style="position:absolute;left:108.6px;top:430.4px;width:8.4px;height:8.4px;background:linear-gradient(#fff,#e6e6e6);border:1px solid #9c9c9c;border-radius:1.5px;"></div><div style="position:absolute;left:110px;top:434px;width:5px;height:1px;background:#3c4aa8;"></div>
<svg style="left:123px;top:427px" width="14" height="14" viewBox="0 0 14 14"><path d="M2.4 5.8 Q7 12.4 11.6 5.8Z" fill="#f4c93a" stroke="#b08a1c" stroke-width=".5"/><ellipse cx="7" cy="4.9" rx="6.6" ry="2.5" fill="#4a9ad6" stroke="#2c6aa8" stroke-width=".6"/><ellipse cx="7" cy="3.2" rx="3.5" ry="2.5" fill="#79bdea" stroke="#2c6aa8" stroke-width=".5"/><path d="M9.8 8.6 l2.7 2.5 -2.5 2.7 -2.7-2.5Z" fill="#efc242" stroke="#a9801c" stroke-width=".7"/></svg>
<div style="position:absolute;top:428px;font-size:10px;line-height:13px;color:#1a1a1a;white-space:pre;left:142px;transform-origin:left center;transform:scaleX(0.9756);">Expertek</div>
<div style="position:absolute;left:132px;top:450px;width:10px;height:1px;background-image:repeating-linear-gradient(90deg,#b4b4b4 0 1px,transparent 1px 2px);"></div>
<svg style="left:142px;top:443px" width="14" height="14" viewBox="0 0 14 14"><path d="M2.4 5.8 Q7 12.4 11.6 5.8Z" fill="#f4c93a" stroke="#b08a1c" stroke-width=".5"/><ellipse cx="7" cy="4.9" rx="6.6" ry="2.5" fill="#4a9ad6" stroke="#2c6aa8" stroke-width=".6"/><ellipse cx="7" cy="3.2" rx="3.5" ry="2.5" fill="#79bdea" stroke="#2c6aa8" stroke-width=".5"/><path d="M9.8 8.6 l2.7 2.5 -2.5 2.7 -2.7-2.5Z" fill="#efc242" stroke="#a9801c" stroke-width=".7"/></svg>
<div style="position:absolute;top:444px;font-size:10px;line-height:13px;color:#1a1a1a;white-space:pre;left:161px;transform-origin:left center;transform:scaleX(0.9228);">Kovess_EA_Client_v2.1</div>
<div style="position:absolute;left:132px;top:466px;width:10px;height:1px;background-image:repeating-linear-gradient(90deg,#b4b4b4 0 1px,transparent 1px 2px);"></div>
<svg style="left:142px;top:459px" width="14" height="14" viewBox="0 0 14 14"><path d="M2.4 5.8 Q7 12.4 11.6 5.8Z" fill="#f4c93a" stroke="#b08a1c" stroke-width=".5"/><ellipse cx="7" cy="4.9" rx="6.6" ry="2.5" fill="#4a9ad6" stroke="#2c6aa8" stroke-width=".6"/><ellipse cx="7" cy="3.2" rx="3.5" ry="2.5" fill="#79bdea" stroke="#2c6aa8" stroke-width=".5"/><path d="M9.8 8.6 l2.7 2.5 -2.5 2.7 -2.7-2.5Z" fill="#efc242" stroke="#a9801c" stroke-width=".7"/></svg>
<div style="position:absolute;top:460px;font-size:10px;line-height:13px;color:#1a1a1a;white-space:pre;left:161px;transform-origin:left center;transform:scaleX(0.9905);">MACD Sample</div>
<div style="position:absolute;left:132px;top:480px;width:10px;height:1px;background-image:repeating-linear-gradient(90deg,#b4b4b4 0 1px,transparent 1px 2px);"></div>
<svg style="left:142px;top:473px" width="14" height="14" viewBox="0 0 14 14"><path d="M2.4 5.8 Q7 12.4 11.6 5.8Z" fill="#f4c93a" stroke="#b08a1c" stroke-width=".5"/><ellipse cx="7" cy="4.9" rx="6.6" ry="2.5" fill="#4a9ad6" stroke="#2c6aa8" stroke-width=".6"/><ellipse cx="7" cy="3.2" rx="3.5" ry="2.5" fill="#79bdea" stroke="#2c6aa8" stroke-width=".5"/><path d="M9.8 8.6 l2.7 2.5 -2.5 2.7 -2.7-2.5Z" fill="#efc242" stroke="#a9801c" stroke-width=".7"/></svg>
<div style="position:absolute;top:474px;font-size:10px;line-height:13px;color:#1a1a1a;white-space:pre;left:161px;transform-origin:left center;transform:scaleX(1.0415);">Moving Average</div>
<div style="position:absolute;left:112px;top:496px;width:11px;height:1px;background-image:repeating-linear-gradient(90deg,#b4b4b4 0 1px,transparent 1px 2px);"></div>
<div style="position:absolute;left:108.6px;top:492.4px;width:8.4px;height:8.4px;background:linear-gradient(#fff,#e6e6e6);border:1px solid #9c9c9c;border-radius:1.5px;"></div><div style="position:absolute;left:110px;top:496px;width:5px;height:1px;background:#3c4aa8;"></div><div style="position:absolute;left:112px;top:494px;width:1px;height:5px;background:#3c4aa8;"></div>
<svg style="left:123px;top:489px" width="14" height="14" viewBox="0 0 14 14"><path d="M2 1.5 h9 v8 h-9Z" fill="#f7dc7a" stroke="#b9912a" stroke-width=".8"/><path d="M3.5 4 h6 M3.5 6 h6" stroke="#b9912a" stroke-width=".8"/><path d="M7 9 l3 -1 2.6 3 -2.4 2.6 -3.2-2Z" fill="#f0c64a" stroke="#a9801c" stroke-width=".7"/></svg>
<div style="position:absolute;top:490px;font-size:10px;line-height:13px;color:#1a1a1a;white-space:pre;left:142px;transform-origin:left center;transform:scaleX(0.9848);">Szkriptek</div>
<div style="position:absolute;left:100px;top:507px;width:210px;height:1px;background:#222;"></div>
<div style="position:absolute;left:103px;top:507px;width:60px;height:18px;background:#fff;border:1px solid #222;border-top:1px solid #fff;border-radius:0 0 2px 2px;box-shadow:1px 1px 0 #888;"></div>
<div style="position:absolute;top:510px;font-size:10px;line-height:13px;color:#111;white-space:pre;left:112px;transform-origin:left center;transform:scaleX(1.0088);">Általános</div>
<div style="position:absolute;top:510px;font-size:10px;line-height:13px;color:#8a8a8a;white-space:pre;left:171px;transform-origin:left center;transform:scaleX(0.9802);">Kedvencek</div>
<div style="position:absolute;left:228px;top:511px;width:1px;height:12px;background:#555;"></div>
<div style="position:absolute;left:313px;top:142px;width:867.5px;height:369px;background:#000;border-left:1px solid #9a9a9a;"></div>
<svg style="left:0;top:0" width="1281" height="704" viewBox="0 0 1281 704" shape-rendering="auto"><defs><clipPath id="cc"><rect x="314" y="143" width="866.5" height="368"/></clipPath></defs><g clip-path="url(#cc)"><path d="M345.1 146V492 M372.6 146V492 M400.0 146V492 M427.4 146V492 M454.9 146V492 M482.3 146V492 M509.7 146V492 M537.1 146V492 M564.6 146V492 M592.0 146V492 M619.4 146V492 M646.9 146V492 M674.3 146V492 M701.7 146V492 M729.1 146V492 M756.6 146V492 M784.0 146V492 M811.4 146V492 M838.9 146V492 M866.3 146V492 M893.7 146V492 M921.2 146V492 M948.6 146V492 M976.0 146V492 M1003.5 146V492 M1030.9 146V492 M1058.3 146V492 M1085.7 146V492 M1113.2 146V492 M1140.6 146V492" stroke="#8692a0" stroke-width="0.92" stroke-dasharray="2.75 2.4" fill="none"/><rect x="318.8" y="209.9" width="144" height="120.7" fill="#0000ff"/><path d="M317 151.6H1143 M317 179.7H1143 M317 207.6H1143 M317 235.8H1143 M317 264.1H1143 M317 292.4H1143 M317 320.7H1143 M317 349.3H1143 M317 377.5H1143 M317 405.7H1143 M317 433.8H1143 M317 462.3H1143 M317 490.4H1143" stroke="#8692a0" stroke-width="0.92" stroke-dasharray="2.75 2.4" fill="none"/><path d="M550.4 146V492 M907.4 146V492 M1071.7 146V492" stroke="#d0d6dc" stroke-width="0.95" stroke-dasharray="2.75 2.4" fill="none"/><path d="M317 423.6H1143" stroke="#1d8d1d" stroke-width="1.2" stroke-dasharray="7.6 5.5 2 5.5" fill="none"/><path d="M317 447.1H1143" stroke="#69717b" stroke-width="1.25" fill="none"/><path d="M337.30 209.5V218.0 M344.16 211.3V219.0 M351.03 209.8V225.8 M357.90 214.0V233.6 M364.76 223.2V235.6 M371.63 210.0V235.6 M378.49 210.0V227.8 M385.36 224.5V227.0 M392.23 218.0V230.8 M399.09 203.0V230.8 M460.89 198.0V228.2 M467.75 225.8V226.6 M474.62 212.7V227.8 M481.48 210.1V228.3 M488.35 212.6V236.8 M495.22 193.7V217.6 M502.08 198.9V213.8 M508.95 198.3V205.0 M515.81 187.0V205.2 M522.68 192.5V215.0 M529.55 199.5V218.3 M536.41 196.2V213.8 M543.28 195.0V227.0 M550.14 198.3V204.3 M557.01 198.7V210.0 M563.88 199.5V232.5 M570.74 201.2V215.8 M577.61 208.7V236.3 M584.47 210.0V242.5 M591.34 212.0V218.8 M598.21 211.7V233.8 M605.07 230.5V260.0 M611.94 255.0V273.8 M618.80 256.2V280.8 M625.67 257.5V285.0 M632.54 284.6V286.2 M639.40 270.7V287.0 M646.27 266.2V285.5 M653.13 273.2V290.5 M660.00 262.0V302.5 M666.87 297.0V320.0 M673.73 311.2V315.5 M680.60 307.0V320.0 M687.46 305.0V322.5 M694.33 292.5V315.0 M701.20 292.5V313.8 M708.06 277.5V308.8 M714.93 279.0V283.0 M721.79 280.0V296.3 M728.66 253.7V290.0 M735.53 236.2V260.0 M742.39 235.5V256.3 M749.26 230.0V250.5 M756.12 243.2V259.5 M762.99 240.5V267.0 M769.86 253.7V273.8 M776.72 179.5V305.0 M783.59 289.5V319.5 M790.45 298.7V330.0 M797.32 325.5V333.0 M804.19 330.0V368.8 M811.05 333.0V366.3 M817.92 351.2V381.3 M824.78 355.7V396.3 M831.65 388.0V412.0 M838.52 403.0V409.5 M845.38 387.0V408.0 M852.25 384.2V408.0 M859.11 388.0V425.5 M865.98 406.2V429.5 M872.85 393.7V423.0 M879.71 398.7V407.5 M886.58 374.5V413.8 M893.44 385.0V414.5 M900.31 380.7V417.0 M907.18 380.7V407.5 M914.04 373.7V395.0 M920.91 402.5V433.8 M927.77 339.5V423.0 M934.64 343.0V372.0 M941.51 349.2V368.0 M948.37 315.0V404.3 M955.24 392.5V423.8 M962.10 417.5V423.0 M968.97 386.2V427.0 M975.84 380.7V401.3 M982.70 380.0V435.0 M989.57 426.2V477.0 M996.43 441.2V466.3 M1003.30 450.0V457.5 M1010.17 440.0V468.8 M1017.03 459.5V481.3 M1023.90 449.2V471.3 M1030.76 433.2V458.8 M1037.63 443.7V457.5 M1044.50 444.5V456.3 M1051.36 440.0V475.0 M1058.23 385.0V462.5 M1065.09 405.0V433.0 M1071.96 428.0V452.5 M1078.83 437.5V485.0 M1085.69 433.0V470.5 M1092.56 397.0V439.5 M1099.42 396.2V427.0 M1106.29 423.4V425.6 M1113.16 406.0V430.6 M1120.02 393.1V418.0 M1126.89 412.5V447.0" stroke="#00cf00" stroke-width="1.05" fill="none"/><g fill="#000" stroke="#00e400" stroke-width="1"><rect x="342.26" y="212.5" width="3.8" height="5.5" /><rect x="362.86" y="225.3" width="3.8" height="3.2" /><rect x="369.73" y="212.4" width="3.8" height="13.3" /><rect x="397.19" y="205.0" width="3.8" height="22.0" /><rect x="472.72" y="219.1" width="3.8" height="6.6" /><rect x="486.45" y="215.0" width="3.8" height="11.2" /><rect x="493.32" y="209.3" width="3.8" height="6.4" /><rect x="500.18" y="205.0" width="3.8" height="4.3" /><rect x="507.05" y="199.5" width="3.8" height="4.9" /><rect x="513.91" y="196.2" width="3.8" height="3.9" /><rect x="527.65" y="204.3" width="3.8" height="2.6" /><rect x="582.57" y="212.5" width="3.8" height="18.3" /><rect x="616.90" y="259.5" width="3.8" height="13.0" /><rect x="637.50" y="271.7" width="3.8" height="14.5" /><rect x="685.56" y="311.7" width="3.8" height="3.8" /><rect x="692.43" y="303.7" width="3.8" height="8.0" /><rect x="706.16" y="279.2" width="3.8" height="29.0" /><rect x="726.76" y="258.2" width="3.8" height="26.8" /><rect x="733.63" y="245.0" width="3.8" height="12.5" /><rect x="740.49" y="243.2" width="3.8" height="2.3" /><rect x="747.36" y="230.5" width="3.8" height="12.7" /><rect x="754.22" y="245.0" width="3.8" height="13.8" /><rect x="843.48" y="390.0" width="3.8" height="17.5" /><rect x="864.08" y="415.0" width="3.8" height="5.8" /><rect x="870.95" y="405.0" width="3.8" height="10.5" /><rect x="877.81" y="399.2" width="3.8" height="2.6" /><rect x="884.68" y="396.5" width="3.8" height="3.0" /><rect x="891.54" y="387.0" width="3.8" height="9.5" /><rect x="905.28" y="382.5" width="3.8" height="23.3" /><rect x="925.87" y="352.0" width="3.8" height="60.5" /><rect x="939.61" y="351.2" width="3.8" height="13.3" /><rect x="960.20" y="418.0" width="3.8" height="4.5" /><rect x="967.07" y="388.0" width="3.8" height="31.5" /><rect x="994.53" y="452.0" width="3.8" height="8.5" /><rect x="1001.40" y="451.2" width="3.8" height="2.1" /><rect x="1022.00" y="457.0" width="3.8" height="11.8" /><rect x="1028.86" y="453.7" width="3.8" height="3.8" /><rect x="1035.73" y="450.5" width="3.8" height="3.3" /><rect x="1042.60" y="446.2" width="3.8" height="2.6" /><rect x="1056.33" y="413.2" width="3.8" height="48.6" /><rect x="1083.79" y="434.5" width="3.8" height="25.5" /><rect x="1090.66" y="400.5" width="3.8" height="34.3" /><rect x="1111.26" y="406.2" width="3.8" height="18.4" /></g><g fill="#ffffff" stroke="#00e400" stroke-width="0.9"><rect x="335.30" y="210.0" width="4" height="5.4"/><rect x="349.03" y="212.7" width="4" height="2.9"/><rect x="355.90" y="215.0" width="4" height="13.5"/><rect x="376.49" y="211.5" width="4" height="15.7"/><rect x="390.23" y="224.8" width="4" height="2.2"/><rect x="458.89" y="200.0" width="4" height="27.2"/><rect x="479.48" y="219.3" width="4" height="6.9"/><rect x="520.68" y="196.2" width="4" height="10.5"/><rect x="555.01" y="201.2" width="4" height="8.3"/><rect x="575.61" y="210.0" width="4" height="20.8"/><rect x="596.21" y="213.7" width="4" height="17.1"/><rect x="603.07" y="230.8" width="4" height="26.7"/><rect x="609.94" y="257.0" width="4" height="15.5"/><rect x="623.67" y="259.5" width="4" height="25.0"/><rect x="644.27" y="271.7" width="4" height="11.5"/><rect x="658.00" y="283.2" width="4" height="14.3"/><rect x="664.87" y="297.5" width="4" height="17.0"/><rect x="678.60" y="313.0" width="4" height="2.5"/><rect x="699.20" y="303.7" width="4" height="3.8"/><rect x="712.93" y="279.2" width="4" height="2.6"/><rect x="719.79" y="281.2" width="4" height="3.8"/><rect x="760.99" y="245.0" width="4" height="15.0"/><rect x="767.86" y="260.0" width="4" height="9.5"/><rect x="774.72" y="270.0" width="4" height="31.3"/><rect x="781.59" y="301.3" width="4" height="10.4"/><rect x="788.45" y="311.3" width="4" height="12.2"/><rect x="795.32" y="327.0" width="4" height="5.0"/><rect x="802.19" y="332.0" width="4" height="24.2"/><rect x="809.05" y="355.8" width="4" height="7.2"/><rect x="815.92" y="362.5" width="4" height="6.7"/><rect x="822.78" y="368.8" width="4" height="27.0"/><rect x="829.65" y="395.5" width="4" height="9.5"/><rect x="836.52" y="404.5" width="4" height="3.0"/><rect x="857.11" y="392.0" width="4" height="28.5"/><rect x="898.31" y="387.5" width="4" height="18.3"/><rect x="918.91" y="403.0" width="4" height="9.5"/><rect x="932.64" y="352.5" width="4" height="12.0"/><rect x="946.37" y="351.2" width="4" height="44.6"/><rect x="953.24" y="395.0" width="4" height="20.0"/><rect x="973.84" y="389.2" width="4" height="4.6"/><rect x="980.70" y="393.2" width="4" height="36.8"/><rect x="987.57" y="430.5" width="4" height="30.3"/><rect x="1008.17" y="451.2" width="4" height="13.8"/><rect x="1015.03" y="465.0" width="4" height="3.8"/><rect x="1049.36" y="446.2" width="4" height="15.1"/><rect x="1063.09" y="413.2" width="4" height="13.3"/><rect x="1069.96" y="428.7" width="4" height="18.8"/><rect x="1076.83" y="447.0" width="4" height="13.0"/><rect x="1097.42" y="401.2" width="4" height="22.0"/><rect x="1118.02" y="406.2" width="4" height="11.3"/><rect x="1124.89" y="417.5" width="4" height="29.1"/></g><g fill="#00e400"><rect x="383.16" y="225.1" width="4.4" height="1.1"/><rect x="465.55" y="225.6" width="4.4" height="1.1"/><rect x="534.21" y="204.4" width="4.4" height="1.4"/><rect x="541.08" y="204.4" width="4.4" height="1.4"/><rect x="547.94" y="200.9" width="4.4" height="1.1"/><rect x="561.68" y="208.8" width="4.4" height="1.1"/><rect x="568.54" y="208.8" width="4.4" height="1.4"/><rect x="589.14" y="213.9" width="4.4" height="1.1"/><rect x="630.34" y="284.6" width="4.4" height="1.6"/><rect x="650.93" y="282.6" width="4.4" height="1.1"/><rect x="671.53" y="312.8" width="4.4" height="1.1"/><rect x="850.05" y="390.0" width="4.4" height="2.0"/><rect x="911.84" y="381.7" width="4.4" height="1.3"/><rect x="1104.09" y="423.8" width="4.4" height="1.1"/></g><path d="M420 209.5V212.6 M440.6 209.5V211.5" stroke="#3a9a7a" stroke-width="1"/><path d="M943.4 341.3 l2.8-2.8 2.4 1.4 v2.8 l-2.4 1.4Z" fill="#ff1a1a" stroke="#e8c8c8" stroke-width=".6"/><path d="M948.6 341.3h2.2" stroke="#c8c8c8" stroke-width=".8"/><path d="M946.4 366 l-2.6 2.6 2.6 2.6" fill="none" stroke="#f4f4f4" stroke-width="1.4"/><path d="M1086.6 427.4 l2.8-3 1.6 1 v4 l-1.6 1Z" fill="#ff1a1a" stroke="#f0d0d0" stroke-width=".6"/><path d="M1073.8 475.8 l2.8-2.8 v1.6 h2.4 v2.4 h-2.4 v1.6Z" fill="#1faa1f" stroke="#e8e8e8" stroke-width=".7"/></g><path d="M316 145.5V492.6" stroke="#c8c8c8" stroke-width="1.2" fill="none"/><path d="M315.5 492.2H1144" stroke="#e2e2e2" stroke-width="1" fill="none"/><path d="M316 145.6H1143" stroke="#9aa0a6" stroke-width=".8" fill="none"/><path d="M1143.6 145V511" stroke="#a9a9a9" stroke-width="1.6" fill="none"/><path d="M1143 151.6h3.2 M1143 179.7h3.2 M1143 207.6h3.2 M1143 235.8h3.2 M1143 264.1h3.2 M1143 292.4h3.2 M1143 320.7h3.2 M1143 349.3h3.2 M1143 377.5h3.2 M1143 405.7h3.2 M1143 433.8h3.2 M1143 462.3h3.2 M1143 490.4h3.2 M317.7 492v3 M372.6 492v3 M427.4 492v3 M482.3 492v3 M537.1 492v3 M592.0 492v3 M646.9 492v3 M701.7 492v3 M756.6 492v3 M811.4 492v3 M866.3 492v3 M921.2 492v3 M976.0 492v3 M1030.9 492v3 M1085.7 492v3 M1140.6 492v3" stroke="#d8d8d8" stroke-width="1" fill="none"/></svg>
<div style="position:absolute;top:146.6px;font-size:8.4px;line-height:11px;color:#fff;white-space:pre;left:1149.3px;transform-origin:left center;transform:scaleX(0.9232);text-shadow:0 0 .6px rgba(255,255,255,.8);">1.13915</div>
<div style="position:absolute;top:174.7px;font-size:8.4px;line-height:11px;color:#fff;white-space:pre;left:1149.3px;transform-origin:left center;transform:scaleX(0.9232);text-shadow:0 0 .6px rgba(255,255,255,.8);">1.13015</div>
<div style="position:absolute;top:202.6px;font-size:8.4px;line-height:11px;color:#fff;white-space:pre;left:1149.3px;transform-origin:left center;transform:scaleX(0.9232);text-shadow:0 0 .6px rgba(255,255,255,.8);">1.12140</div>
<div style="position:absolute;top:230.8px;font-size:8.4px;line-height:11px;color:#fff;white-space:pre;left:1149.3px;transform-origin:left center;transform:scaleX(0.9425);text-shadow:0 0 .6px rgba(255,255,255,.8);">1.11240</div>
<div style="position:absolute;top:259.1px;font-size:8.4px;line-height:11px;color:#fff;white-space:pre;left:1149.3px;transform-origin:left center;transform:scaleX(0.9232);text-shadow:0 0 .6px rgba(255,255,255,.8);">1.10340</div>
<div style="position:absolute;top:287.4px;font-size:8.4px;line-height:11px;color:#fff;white-space:pre;left:1149.3px;transform-origin:left center;transform:scaleX(0.9232);text-shadow:0 0 .6px rgba(255,255,255,.8);">1.09465</div>
<div style="position:absolute;top:315.7px;font-size:8.4px;line-height:11px;color:#fff;white-space:pre;left:1149.3px;transform-origin:left center;transform:scaleX(0.9232);text-shadow:0 0 .6px rgba(255,255,255,.8);">1.08565</div>
<div style="position:absolute;top:344.3px;font-size:8.4px;line-height:11px;color:#fff;white-space:pre;left:1149.3px;transform-origin:left center;transform:scaleX(0.9232);text-shadow:0 0 .6px rgba(255,255,255,.8);">1.07665</div>
<div style="position:absolute;top:372.5px;font-size:8.4px;line-height:11px;color:#fff;white-space:pre;left:1149.3px;transform-origin:left center;transform:scaleX(0.9232);text-shadow:0 0 .6px rgba(255,255,255,.8);">1.06790</div>
<div style="position:absolute;top:400.7px;font-size:8.4px;line-height:11px;color:#fff;white-space:pre;left:1149.3px;transform-origin:left center;transform:scaleX(0.9232);text-shadow:0 0 .6px rgba(255,255,255,.8);">1.05890</div>
<div style="position:absolute;top:428.8px;font-size:8.4px;line-height:11px;color:#fff;white-space:pre;left:1149.3px;transform-origin:left center;transform:scaleX(0.9232);text-shadow:0 0 .6px rgba(255,255,255,.8);">1.04990</div>
<div style="position:absolute;top:457.3px;font-size:8.4px;line-height:11px;color:#fff;white-space:pre;left:1149.3px;transform-origin:left center;transform:scaleX(0.9232);text-shadow:0 0 .6px rgba(255,255,255,.8);">1.04090</div>
<div style="position:absolute;top:485.4px;font-size:8.4px;line-height:11px;color:#fff;white-space:pre;left:1149.3px;transform-origin:left center;transform:scaleX(0.9232);text-shadow:0 0 .6px rgba(255,255,255,.8);">1.03215</div>
<div style="position:absolute;left:1145px;top:442.3px;width:35.2px;height:9.7px;background:#fff;"></div>
<div style="position:absolute;top:442.1px;font-size:8.4px;line-height:11px;color:#000;white-space:pre;left:1149.3px;transform-origin:left center;transform:scaleX(0.9232);">1.04598</div>
<div style="position:absolute;top:496px;font-size:8.2px;line-height:11px;color:#fff;white-space:pre;left:316.3px;transform-origin:left center;transform:scaleX(0.9786);text-shadow:0 0 .6px rgba(255,255,255,.8);">23 Aug 2016</div>
<div style="position:absolute;top:496px;font-size:8.2px;line-height:11px;color:#fff;white-space:pre;left:371.2px;transform-origin:left center;transform:scaleX(0.9669);text-shadow:0 0 .6px rgba(255,255,255,.8);">1 Sep 2016</div>
<div style="position:absolute;top:496px;font-size:8.2px;line-height:11px;color:#fff;white-space:pre;left:426.0px;transform-origin:left center;transform:scaleX(0.9819);text-shadow:0 0 .6px rgba(255,255,255,.8);">11 Sep 2016</div>
<div style="position:absolute;top:496px;font-size:8.2px;line-height:11px;color:#fff;white-space:pre;left:480.9px;transform-origin:left center;transform:scaleX(0.9690);text-shadow:0 0 .6px rgba(255,255,255,.8);">20 Sep 2016</div>
<div style="position:absolute;top:496px;font-size:8.2px;line-height:11px;color:#fff;white-space:pre;left:535.7px;transform-origin:left center;transform:scaleX(0.9690);text-shadow:0 0 .6px rgba(255,255,255,.8);">29 Sep 2016</div>
<div style="position:absolute;top:496px;font-size:8.2px;line-height:11px;color:#fff;white-space:pre;left:590.6px;transform-origin:left center;transform:scaleX(1.0111);text-shadow:0 0 .6px rgba(255,255,255,.8);">9 Oct 2016</div>
<div style="position:absolute;top:496px;font-size:8.2px;line-height:11px;color:#fff;white-space:pre;left:645.5px;transform-origin:left center;transform:scaleX(1.0088);text-shadow:0 0 .6px rgba(255,255,255,.8);">18 Oct 2016</div>
<div style="position:absolute;top:496px;font-size:8.2px;line-height:11px;color:#fff;white-space:pre;left:700.3px;transform-origin:left center;transform:scaleX(1.0088);text-shadow:0 0 .6px rgba(255,255,255,.8);">27 Oct 2016</div>
<div style="position:absolute;top:496px;font-size:8.2px;line-height:11px;color:#fff;white-space:pre;left:755.2px;transform-origin:left center;transform:scaleX(0.9671);text-shadow:0 0 .6px rgba(255,255,255,.8);">6 Nov 2016</div>
<div style="position:absolute;top:496px;font-size:8.2px;line-height:11px;color:#fff;white-space:pre;left:810.0px;transform-origin:left center;transform:scaleX(0.9692);text-shadow:0 0 .6px rgba(255,255,255,.8);">15 Nov 2016</div>
<div style="position:absolute;top:496px;font-size:8.2px;line-height:11px;color:#fff;white-space:pre;left:864.9px;transform-origin:left center;transform:scaleX(0.9692);text-shadow:0 0 .6px rgba(255,255,255,.8);">24 Nov 2016</div>
<div style="position:absolute;top:496px;font-size:8.2px;line-height:11px;color:#fff;white-space:pre;left:919.8px;transform-origin:left center;transform:scaleX(0.9671);text-shadow:0 0 .6px rgba(255,255,255,.8);">4 Dec 2016</div>
<div style="position:absolute;top:496px;font-size:8.2px;line-height:11px;color:#fff;white-space:pre;left:974.6px;transform-origin:left center;transform:scaleX(0.9692);text-shadow:0 0 .6px rgba(255,255,255,.8);">13 Dec 2016</div>
<div style="position:absolute;top:496px;font-size:8.2px;line-height:11px;color:#fff;white-space:pre;left:1029.5px;transform-origin:left center;transform:scaleX(0.9692);text-shadow:0 0 .6px rgba(255,255,255,.8);">22 Dec 2016</div>
<div style="position:absolute;top:496px;font-size:8.2px;line-height:11px;color:#fff;white-space:pre;left:1084.3px;transform-origin:left center;text-shadow:0 0 .6px rgba(255,255,255,.8);">4 Jan 2017</div>
<div style="position:absolute;left:317px;top:147.4px;width:168.8px;height:13px;background:#000;"></div>
<svg style="left:319px;top:149px" width="8" height="6" viewBox="0 0 8 6"><path d="M0 5.5 L3.7 .6 L7.4 5.5Z" fill="#f4f4f4"/></svg>
<div style="position:absolute;left:318.6px;top:154.2px;width:143.6px;height:3.6px;background:#2f4f4f;"></div>
<div style="position:absolute;top:146.5px;font-size:8px;line-height:11px;color:#f4f4f4;white-space:pre;left:329.5px;transform-origin:left center;">EURUSD,Daily  1.05517 1.05665 1.04585 1.04598</div>
<div style="position:absolute;top:147.6px;font-size:8.7px;line-height:11px;color:#f4f4f4;white-space:pre;left:1042px;transform-origin:left center;transform:scaleX(0.9259);">Kovess_EA_Client_v2.1</div>
<svg style="left:1129.7px;top:148.2px" width="10.6" height="10.6" viewBox="0 0 10 10"><circle cx="5" cy="5" r="4.2" fill="none" stroke="#e8e8e8" stroke-width=".9"/><path d="M3.4 3.8v.4M6.6 3.8v.4" stroke="#e8e8e8" stroke-width="1"/><path d="M2.9 6 Q5 8.2 7.1 6" stroke="#e8e8e8" stroke-width=".8" fill="none"/></svg>
<div style="position:absolute;left:319px;top:160px;width:40px;height:19px;background:linear-gradient(#f24a4a 0%,#e83838 60%,#e02c2c 100%);"></div>
<div style="position:absolute;left:445.5px;top:160px;width:39.4px;height:19px;background:linear-gradient(#f24a4a 0%,#e83838 60%,#e02c2c 100%);"></div>
<div style="position:absolute;left:322.5px;top:178px;width:33px;height:1px;background:#ff9a9a;"></div>
<div style="position:absolute;left:449px;top:178px;width:33px;height:1px;background:#ff9a9a;"></div>
<div style="position:absolute;left:319px;top:179px;width:82.8px;height:29px;background:linear-gradient(#e13434 0%,#cf1d1d 45%,#b40202 100%);"></div>
<div style="position:absolute;left:403px;top:179px;width:81.9px;height:29px;background:linear-gradient(#e13434 0%,#cf1d1d 45%,#b40202 100%);"></div>
<div style="position:absolute;left:359px;top:160px;width:86.5px;height:19px;background:#000;"></div>
<div style="position:absolute;left:360px;top:160.4px;width:84px;height:17px;background:#fff;border:1px solid #a8a8a8;border-radius:1px;"></div>
<div style="position:absolute;left:361px;top:161.4px;width:16.4px;height:15px;background:linear-gradient(#e9e9e9,#c9c9c9);border-right:1px solid #b0b0b0;"></div>
<div style="position:absolute;left:426px;top:161.4px;width:17px;height:15px;background:linear-gradient(#e9e9e9,#c9c9c9);border-left:1px solid #b0b0b0;"></div>
<svg style="left:366.4px;top:167px" width="6" height="4" viewBox="0 0 6 4"><path d="M0 .3H6L3 3.7Z" fill="#4d6bc4"/></svg>
<svg style="left:432px;top:166.6px" width="6" height="4" viewBox="0 0 6 4"><path d="M0 3.7H6L3 .3Z" fill="#4d6bc4"/></svg>
<div style="position:absolute;top:161.6px;font-size:10px;line-height:13px;color:#222;white-space:pre;left:405px;transform-origin:left center;transform:scaleX(0.8991);">1.18</div>
<div style="position:absolute;top:163.2px;font-size:10px;line-height:13px;color:#ffe9e9;white-space:pre;left:328px;transform-origin:left center;transform:scaleX(0.8176);">SELL</div>
<div style="position:absolute;top:163.2px;font-size:10px;line-height:13px;color:#ffe9e9;white-space:pre;left:455.5px;transform-origin:left center;transform:scaleX(0.9241);">BUY</div>
<div style="position:absolute;top:193.4px;font-size:10.5px;line-height:12px;color:#fff;white-space:pre;font-weight:bold;left:331.8px;transform-origin:left center;transform:scaleX(0.9689);">1.04</div><div style="position:absolute;top:179.1px;font-size:27.5px;line-height:29px;color:#fff;white-space:pre;left:356.0px;transform-origin:left center;transform:scaleX(0.9154);">59</div><div style="position:absolute;top:180.2px;font-size:9.6px;line-height:11px;color:#fff;white-space:pre;font-weight:bold;left:387.6px;transform-origin:left center;transform:scaleX(0.8996);">3</div>
<div style="position:absolute;top:193.4px;font-size:10.5px;line-height:12px;color:#fff;white-space:pre;font-weight:bold;left:415.6px;transform-origin:left center;transform:scaleX(0.9689);">1.04</div><div style="position:absolute;top:179.1px;font-size:27.5px;line-height:29px;color:#fff;white-space:pre;left:439.8px;transform-origin:left center;transform:scaleX(0.9154);">61</div><div style="position:absolute;top:180.2px;font-size:9.6px;line-height:11px;color:#fff;white-space:pre;font-weight:bold;left:471.40000000000003px;transform-origin:left center;transform:scaleX(0.8996);">2</div>
<div style="position:absolute;top:250.6px;font-size:8px;line-height:11px;color:#f6f6f6;white-space:pre;left:320.5px;transform-origin:left center;">Status   :   Account number OK</div>
<div style="position:absolute;top:260.8px;font-size:8px;line-height:11px;color:#f6f6f6;white-space:pre;left:320.5px;transform-origin:left center;transform:scaleX(1.0227);">Leverage  :  1 : 500</div>
<div style="position:absolute;top:270.9px;font-size:8px;line-height:11px;color:#f6f6f6;white-space:pre;left:320.5px;transform-origin:left center;transform:scaleX(1.0443);">Account Type  :  OIG-Live</div>
<div style="position:absolute;top:281.1px;font-size:8px;line-height:11px;color:#f6f6f6;white-space:pre;left:320.5px;transform-origin:left center;transform:scaleX(1.0600);">Server Time  :  15:24:24</div>
<div style="position:absolute;top:291.3px;font-size:8px;line-height:11px;color:#f6f6f6;white-space:pre;left:320.5px;transform-origin:left center;">Account Equity  =  18819.04</div>
<div style="position:absolute;top:301.4px;font-size:8px;line-height:11px;color:#f6f6f6;white-space:pre;left:320.5px;transform-origin:left center;transform:scaleX(1.0155);">Free Margin    =  18496.7822</div>
<div style="position:absolute;top:333px;font-size:8px;line-height:11px;color:#f6f6f6;white-space:pre;left:320.3px;transform-origin:left center;transform:scaleX(0.9876);">Trade parameters</div>
<div style="position:absolute;left:320px;top:349px;width:134px;height:1px;background-image:repeating-linear-gradient(90deg,#b4aca0 0 1.4px,#5a5a5a 1.4px 2.1px);"></div>
<div style="position:absolute;top:353.3px;font-size:8px;line-height:11px;color:#f6f6f6;white-space:pre;left:320.5px;transform-origin:left center;transform:scaleX(0.9322);">Risk</div>
<div style="position:absolute;top:353.3px;font-size:8px;line-height:11px;color:#f6f6f6;white-space:pre;left:379px;transform-origin:left center;transform:scaleX(1.0367);">10%</div>
<div style="position:absolute;top:363.6px;font-size:8px;line-height:11px;color:#f6f6f6;white-space:pre;left:320.5px;transform-origin:left center;transform:scaleX(1.0359);">Calculated lots  :  1.78</div>
<div style="position:absolute;left:320px;top:379.3px;width:134px;height:1px;background-image:repeating-linear-gradient(90deg,#b4aca0 0 1.4px,#5a5a5a 1.4px 2.1px);"></div>
<div style="position:absolute;top:413.4px;font-size:8px;line-height:11px;color:#f6f6f6;white-space:pre;left:322.8px;transform-origin:left center;transform:scaleX(0.9853);">#40503487 sell 1.53</div>
<div style="position:absolute;left:313px;top:511px;width:869px;height:1.6px;background:#8e8e8e;"></div>
<div style="position:absolute;left:313px;top:513px;width:869px;height:17px;background:#f0f0f0;"></div>
<div style="position:absolute;left:317.5px;top:512px;width:83px;height:17px;background:#fff;border:1px solid #222;border-top:1px solid #fff;border-radius:0 0 2px 2px;box-shadow:1px 1px 0 #888;"></div>
<div style="position:absolute;left:314px;top:515px;width:1px;height:13px;background:#555;"></div>
<div style="position:absolute;top:515px;font-size:10px;line-height:13px;color:#111;white-space:pre;left:328px;transform-origin:left center;transform:scaleX(0.9222);">EURUSD,Daily</div>
<div style="position:absolute;top:515px;font-size:10px;line-height:13px;color:#8a8a8a;white-space:pre;left:410px;transform-origin:left center;transform:scaleX(0.9222);">EURUSD,Daily</div>
<div style="position:absolute;left:482px;top:516px;width:1px;height:12px;background:#555;"></div>
<svg style="left:1154px;top:517px" width="20" height="7" viewBox="0 0 20 7"><path d="M4 0 L0 3.5 L4 7Z M16 0 L20 3.5 L16 7Z" fill="#9a9a9a"/></svg>
<div style="position:absolute;left:98px;top:530px;width:1084px;height:1px;background:#dadada;"></div>
<div style="position:absolute;left:98px;top:531px;width:13px;height:144px;background:#e3e9f1;"></div>
<svg style="left:101px;top:534px" width="7" height="7" viewBox="0 0 7 7"><path d="M1 1 L6 6 M6 1 L1 6" stroke="#111" stroke-width="1.5"/></svg>
<div style="position:absolute;left:98.6px;top:631px;width:11.4px;height:42.5px;background:#c3cfe1;"></div>
<div style="position:absolute;left:99px;top:673.5px;width:42px;height:12px;transform-origin:0 0;transform:rotate(-90deg);font-size:10px;line-height:12px;color:#536480;white-space:pre;text-align:left;padding-left:2px;">Terminál</div>
<div style="position:absolute;left:111px;top:532px;width:1068px;height:124px;background:#fff;border:1px solid #cfcfcf;border-bottom:none;"></div>
<div style="position:absolute;left:112px;top:533px;width:1066px;height:21px;background:linear-gradient(#ffffff 0%,#fafafa 50%,#ececec 100%);border-bottom:1px solid #d5d5d5;"></div>
<div style="position:absolute;left:216px;top:534px;width:1px;height:19px;background:#e0e0e0;"></div>
<div style="position:absolute;left:216px;top:555px;width:1px;height:17px;background:#e6e6e6;"></div>
<div style="position:absolute;left:362.5px;top:534px;width:1px;height:19px;background:#e0e0e0;"></div>
<div style="position:absolute;left:362.5px;top:555px;width:1px;height:17px;background:#e6e6e6;"></div>
<div style="position:absolute;left:434.5px;top:534px;width:1px;height:19px;background:#e0e0e0;"></div>
<div style="position:absolute;left:434.5px;top:555px;width:1px;height:17px;background:#e6e6e6;"></div>
<div style="position:absolute;left:493.5px;top:534px;width:1px;height:19px;background:#e0e0e0;"></div>
<div style="position:absolute;left:493.5px;top:555px;width:1px;height:17px;background:#e6e6e6;"></div>
<div style="position:absolute;left:564.5px;top:534px;width:1px;height:19px;background:#e0e0e0;"></div>
<div style="position:absolute;left:564.5px;top:555px;width:1px;height:17px;background:#e6e6e6;"></div>
<div style="position:absolute;left:646px;top:534px;width:1px;height:19px;background:#e0e0e0;"></div>
<div style="position:absolute;left:646px;top:555px;width:1px;height:17px;background:#e6e6e6;"></div>
<div style="position:absolute;left:726px;top:534px;width:1px;height:19px;background:#e0e0e0;"></div>
<div style="position:absolute;left:726px;top:555px;width:1px;height:17px;background:#e6e6e6;"></div>
<div style="position:absolute;left:806.5px;top:534px;width:1px;height:19px;background:#e0e0e0;"></div>
<div style="position:absolute;left:806.5px;top:555px;width:1px;height:17px;background:#e6e6e6;"></div>
<div style="position:absolute;left:887.5px;top:534px;width:1px;height:19px;background:#e0e0e0;"></div>
<div style="position:absolute;left:887.5px;top:555px;width:1px;height:17px;background:#e6e6e6;"></div>
<div style="position:absolute;left:967.5px;top:534px;width:1px;height:19px;background:#e0e0e0;"></div>
<div style="position:absolute;left:967.5px;top:555px;width:1px;height:17px;background:#e6e6e6;"></div>
<div style="position:absolute;left:1048.5px;top:534px;width:1px;height:19px;background:#e0e0e0;"></div>
<div style="position:absolute;left:1048.5px;top:555px;width:1px;height:17px;background:#e6e6e6;"></div>
<div style="position:absolute;top:538px;font-size:10px;line-height:13px;color:#1a1a1a;white-space:pre;left:117px;transform-origin:left center;transform:scaleX(0.9803);">Megbízás</div>
<svg style="left:171px;top:542px" width="5" height="5" viewBox="0 0 5 5"><path d="M.5 4.5 L4 .5" stroke="#999" stroke-width=".8"/></svg>
<div style="position:absolute;top:538px;font-size:10px;line-height:13px;color:#1a1a1a;white-space:pre;left:322.0px;transform-origin:left center;transform:scaleX(1.0640);">Időpont</div>
<div style="position:absolute;top:538px;font-size:10px;line-height:13px;color:#1a1a1a;white-space:pre;left:406.5px;transform-origin:left center;">Típus</div>
<div style="position:absolute;top:538px;font-size:10px;line-height:13px;color:#1a1a1a;white-space:pre;left:443.2px;transform-origin:left center;transform:scaleX(0.9771);">Kötéseg...</div>
<div style="position:absolute;top:538px;font-size:10px;line-height:13px;color:#1a1a1a;white-space:pre;left:502.20000000000005px;transform-origin:left center;transform:scaleX(1.0436);">Instrument...</div>
<div style="position:absolute;top:538px;font-size:10px;line-height:13px;color:#1a1a1a;white-space:pre;left:633.5px;transform-origin:left center;transform:scaleX(0.9500);">Ár</div>
<div style="position:absolute;top:538px;font-size:10px;line-height:13px;color:#1a1a1a;white-space:pre;left:701.5px;transform-origin:left center;transform:scaleX(0.9725);">S / L</div>
<div style="position:absolute;top:538px;font-size:10px;line-height:13px;color:#1a1a1a;white-space:pre;left:781.0px;transform-origin:left center;transform:scaleX(1.0271);">T / P</div>
<div style="position:absolute;top:538px;font-size:10px;line-height:13px;color:#1a1a1a;white-space:pre;left:872.5px;transform-origin:left center;transform:scaleX(1.1000);">Ár</div>
<div style="position:absolute;top:538px;font-size:10px;line-height:13px;color:#1a1a1a;white-space:pre;left:931.5px;transform-origin:left center;transform:scaleX(1.0257);">Jutalék</div>
<div style="position:absolute;top:538px;font-size:10px;line-height:13px;color:#1a1a1a;white-space:pre;left:1014.0px;transform-origin:left center;transform:scaleX(1.0207);">Kamat</div>
<div style="position:absolute;top:538px;font-size:10px;line-height:13px;color:#1a1a1a;white-space:pre;left:1148.5px;transform-origin:left center;transform:scaleX(1.0711);">Profit</div>
<div style="position:absolute;left:112px;top:572px;width:1066px;height:1px;background:#e6e6e6;"></div>
<svg style="left:115px;top:557px" width="12" height="13" viewBox="0 0 12 13"><path d="M1.5 .8 h5.5 l3 3 v8 h-8.5Z" fill="#fdfdfd" stroke="#7a7a7a" stroke-width=".9"/><circle cx="8.6" cy="9.8" r="2.6" fill="#e8452a" stroke="#a82a12" stroke-width=".6"/></svg>
<div style="position:absolute;top:557px;font-size:10px;line-height:13px;color:#111;white-space:pre;left:130px;transform-origin:left center;transform:scaleX(0.9215);">40503487</div>
<div style="position:absolute;top:557px;font-size:10px;line-height:13px;color:#111;white-space:pre;left:275.0px;transform-origin:left center;transform:scaleX(0.9122);">2017.01.05 00:06:07</div>
<div style="position:absolute;top:557px;font-size:10px;line-height:13px;color:#111;white-space:pre;left:418px;transform-origin:left center;transform:scaleX(0.9330);">sell</div>
<div style="position:absolute;top:557px;font-size:10px;line-height:13px;color:#111;white-space:pre;left:471.0px;transform-origin:left center;transform:scaleX(0.8991);">1.53</div>
<div style="position:absolute;top:557px;font-size:10px;line-height:13px;color:#111;white-space:pre;left:532.0px;transform-origin:left center;transform:scaleX(0.9648);">eurusd</div>
<div style="position:absolute;top:557px;font-size:10px;line-height:13px;color:#111;white-space:pre;left:610px;transform-origin:left center;transform:scaleX(0.9129);">1.05313</div>
<div style="position:absolute;top:557px;font-size:10px;line-height:13px;color:#111;white-space:pre;left:689.0px;transform-origin:left center;transform:scaleX(0.9268);">0.00000</div>
<div style="position:absolute;top:557px;font-size:10px;line-height:13px;color:#111;white-space:pre;left:770.0px;transform-origin:left center;transform:scaleX(0.9268);">0.00000</div>
<div style="position:absolute;top:557px;font-size:10px;line-height:13px;color:#111;white-space:pre;left:850.5px;transform-origin:left center;transform:scaleX(0.9129);">1.04612</div>
<div style="position:absolute;top:557px;font-size:10px;line-height:13px;color:#111;white-space:pre;left:943.5px;transform-origin:left center;transform:scaleX(0.9433);">-7.65</div>
<div style="position:absolute;top:557px;font-size:10px;line-height:13px;color:#111;white-space:pre;left:1022.0px;transform-origin:left center;transform:scaleX(0.9433);">-3.24</div>
<div style="position:absolute;top:557px;font-size:10px;line-height:13px;color:#111;white-space:pre;left:1121.0px;transform-origin:left center;transform:scaleX(0.9377);">1 072.53</div>
<svg style="left:1166px;top:560px" width="7" height="7" viewBox="0 0 7 7"><path d="M1 1 L6 6 M6 1 L1 6" stroke="#9a9a9a" stroke-width="1.3"/></svg>
<div style="position:absolute;left:112px;top:572.6px;width:1066px;height:16.4px;background:#c6c6c6;"></div>
<svg style="left:114.5px;top:574px" width="11" height="13" viewBox="0 0 11 13"><rect x=".5" y=".5" width="10" height="12" rx="1" fill="#fbfbfb" stroke="#7a7a7a" stroke-width=".9"/><path d="M5.5 3 L9 6.8 H7 V10 H4 V6.8 H2Z" fill="#2db52d" stroke="#157a15" stroke-width=".6"/></svg>
<div style="position:absolute;top:574px;font-size:10px;line-height:13px;color:#111;white-space:pre;font-weight:bold;left:130.7px;transform-origin:left center;transform:scaleX(1.0098);">Egyenleg: 17 757.40 USD  Saját tőke: 18 819.04  Letét: 322.26  Szabad margin: 18 496.78  Margin szint: 5839.75%</div>
<div style="position:absolute;top:574px;font-size:10px;line-height:13px;color:#111;white-space:pre;font-weight:bold;left:1117.0px;transform-origin:left center;transform:scaleX(1.0404);">1 061.64</div>
<div style="position:absolute;left:111px;top:656px;width:1070px;height:19px;background:#f0f0f0;"></div>
<div style="position:absolute;left:111px;top:655.5px;width:1068px;height:1.2px;background:#1a1a1a;"></div>
<div style="position:absolute;left:113px;top:655px;width:67.5px;height:17.6px;background:#fff;border:1px solid #222;border-top:1px solid #fff;border-radius:0 0 2px 2px;box-shadow:1px 1px 0 #888;"></div>
<div style="position:absolute;top:657.5px;font-size:10px;line-height:13px;color:#111;white-space:pre;left:122.5px;transform-origin:left center;transform:scaleX(0.9374);">Kereskedés</div>
<div style="position:absolute;top:656.8px;font-size:10px;line-height:13px;color:#858585;white-space:pre;left:189.4px;transform-origin:left center;transform:scaleX(0.9920);">Kitettség</div>
<div style="position:absolute;left:237.5px;top:659px;width:1px;height:12px;background:#555;"></div>
<div style="position:absolute;top:656.8px;font-size:10px;line-height:13px;color:#858585;white-space:pre;left:245.4px;transform-origin:left center;transform:scaleX(1.0111);">Számlatörténet</div>
<div style="position:absolute;left:322px;top:659px;width:1px;height:12px;background:#555;"></div>
<div style="position:absolute;top:656.8px;font-size:10px;line-height:13px;color:#858585;white-space:pre;left:330.4px;transform-origin:left center;transform:scaleX(0.9878);">Hírek</div>
<div style="position:absolute;left:369px;top:659px;width:1px;height:12px;background:#555;"></div>
<div style="position:absolute;top:656.8px;font-size:10px;line-height:13px;color:#858585;white-space:pre;left:377.7px;transform-origin:left center;transform:scaleX(0.9467);">Riasztások</div>
<div style="position:absolute;left:432.2px;top:659px;width:1px;height:12px;background:#555;"></div>
<div style="position:absolute;top:656.8px;font-size:10px;line-height:13px;color:#858585;white-space:pre;left:441.2px;transform-origin:left center;transform:scaleX(0.9555);">Levelesláda</div>
<div style="position:absolute;left:507.3px;top:659px;width:1px;height:12px;background:#555;"></div>
<div style="position:absolute;top:656.8px;font-size:10px;line-height:13px;color:#858585;white-space:pre;left:516px;transform-origin:left center;transform:scaleX(0.9356);">Társaság</div>
<div style="position:absolute;left:564.5px;top:659px;width:1px;height:12px;background:#555;"></div>
<div style="position:absolute;top:656.8px;font-size:10px;line-height:13px;color:#858585;white-space:pre;left:572.6px;transform-origin:left center;transform:scaleX(0.9047);">Piac</div>
<div style="position:absolute;left:600px;top:659px;width:1px;height:12px;background:#555;"></div>
<div style="position:absolute;top:656.8px;font-size:10px;line-height:13px;color:#858585;white-space:pre;left:608.2px;transform-origin:left center;transform:scaleX(0.9871);">Szignálok</div>
<div style="position:absolute;left:660px;top:659px;width:1px;height:12px;background:#555;"></div>
<div style="position:absolute;top:656.8px;font-size:10px;line-height:13px;color:#858585;white-space:pre;left:668.5px;transform-origin:left center;transform:scaleX(0.9723);">Kódbázis</div>
<div style="position:absolute;left:717.5px;top:659px;width:1px;height:12px;background:#555;"></div>
<div style="position:absolute;top:656.8px;font-size:10px;line-height:13px;color:#858585;white-space:pre;left:726px;transform-origin:left center;transform:scaleX(0.9885);">Expert napló</div>
<div style="position:absolute;left:790px;top:659px;width:1px;height:12px;background:#555;"></div>
<div style="position:absolute;top:656.8px;font-size:10px;line-height:13px;color:#858585;white-space:pre;left:799px;transform-origin:left center;transform:scaleX(0.9951);">Napló</div>
<div style="position:absolute;left:835px;top:659px;width:1px;height:12px;background:#555;"></div>
<div style="position:absolute;top:660.6px;font-size:8.5px;line-height:10px;color:#ff2a10;white-space:pre;font-weight:bold;left:356.3px;transform-origin:left center;">2</div>
<div style="position:absolute;top:660.6px;font-size:8.5px;line-height:10px;color:#ff2a10;white-space:pre;font-weight:bold;left:493.8px;transform-origin:left center;">6</div>
<div style="position:absolute;left:98px;top:675px;width:1084px;height:2px;background:#f7f7f7;"></div>
<div style="position:absolute;left:98px;top:677px;width:1084px;height:20.4px;background:#f0f0f0;border-top:1px solid #d6d6d6;"></div>
<div style="position:absolute;top:681.5px;font-size:10px;line-height:13px;color:#111;white-space:pre;left:100px;transform-origin:left center;transform:scaleX(1.0060);">Segítségért nyomja meg az F1 billentyűt</div>
<div style="position:absolute;top:681.5px;font-size:10px;line-height:13px;color:#111;white-space:pre;left:576.5px;transform-origin:left center;transform:scaleX(0.9219);">Swiss Franc</div>
<div style="position:absolute;top:681.5px;font-size:10px;line-height:13px;color:#111;white-space:pre;left:675px;transform-origin:left center;transform:scaleX(0.9273);">2016.10.11 00:00</div>
<div style="position:absolute;top:681.5px;font-size:10px;line-height:13px;color:#111;white-space:pre;left:763.5px;transform-origin:left center;transform:scaleX(0.9233);">O: 1.11404</div>
<div style="position:absolute;top:681.5px;font-size:10px;line-height:13px;color:#111;white-space:pre;left:823.5px;transform-origin:left center;transform:scaleX(0.9443);">H: 1.11404</div>
<div style="position:absolute;top:681.5px;font-size:10px;line-height:13px;color:#111;white-space:pre;left:885px;transform-origin:left center;transform:scaleX(0.8992);">L: 1.10489</div>
<div style="position:absolute;top:681.5px;font-size:10px;line-height:13px;color:#111;white-space:pre;left:943.5px;transform-origin:left center;transform:scaleX(0.8789);">C: 1.10571</div>
<div style="position:absolute;top:681.5px;font-size:10px;line-height:13px;color:#111;white-space:pre;left:1002.5px;transform-origin:left center;transform:scaleX(0.9066);">V: 104187</div>
<div style="position:absolute;top:681.5px;font-size:10px;line-height:13px;color:#111;white-space:pre;left:1082.5px;transform-origin:left center;transform:scaleX(0.9775);">206/0 kb</div>
<div style="position:absolute;left:571px;top:680px;width:1px;height:15px;background:#bdbdbd;"></div>
<div style="position:absolute;left:670px;top:680px;width:1px;height:15px;background:#bdbdbd;"></div>
<div style="position:absolute;left:756px;top:680px;width:1px;height:15px;background:#bdbdbd;"></div>
<div style="position:absolute;left:817.5px;top:680px;width:1px;height:15px;background:#bdbdbd;"></div>
<div style="position:absolute;left:879px;top:680px;width:1px;height:15px;background:#bdbdbd;"></div>
<div style="position:absolute;left:937.5px;top:680px;width:1px;height:15px;background:#bdbdbd;"></div>
<div style="position:absolute;left:996.5px;top:680px;width:1px;height:15px;background:#bdbdbd;"></div>
<div style="position:absolute;left:1052.5px;top:680px;width:1px;height:15px;background:#bdbdbd;"></div>
<svg style="left:1059.4px;top:682.4px" width="20" height="11" viewBox="0 0 20 11"><rect x="0.00" y="0" width="1.45" height="9.50" fill="#5f8f1c"/><rect x="0.00" y="9.50" width="1.45" height="1.50" fill="#b5341c"/><rect x="2.22" y="0" width="1.45" height="8.55" fill="#5f8f1c"/><rect x="2.22" y="8.55" width="1.45" height="2.45" fill="#b5341c"/><rect x="4.44" y="0" width="1.45" height="7.60" fill="#5f8f1c"/><rect x="4.44" y="7.60" width="1.45" height="3.40" fill="#b5341c"/><rect x="6.66" y="0" width="1.45" height="6.65" fill="#5f8f1c"/><rect x="6.66" y="6.65" width="1.45" height="4.35" fill="#b5341c"/><rect x="8.88" y="0" width="1.45" height="5.70" fill="#5f8f1c"/><rect x="8.88" y="5.70" width="1.45" height="5.30" fill="#b5341c"/><rect x="11.10" y="0" width="1.45" height="4.75" fill="#5f8f1c"/><rect x="11.10" y="4.75" width="1.45" height="6.25" fill="#b5341c"/><rect x="13.32" y="0" width="1.45" height="3.80" fill="#5f8f1c"/><rect x="13.32" y="3.80" width="1.45" height="7.20" fill="#b5341c"/><rect x="15.54" y="0" width="1.45" height="2.85" fill="#5f8f1c"/><rect x="15.54" y="2.85" width="1.45" height="8.15" fill="#b5341c"/><rect x="17.76" y="0" width="1.45" height="1.90" fill="#5f8f1c"/><rect x="17.76" y="1.90" width="1.45" height="9.10" fill="#b5341c"/></svg>
<svg style="left:1168px;top:684.5px" width="13" height="13" viewBox="0 0 13 13"><path d="M0 13 L13 0 M3.2 13 L13 3.2 M6.4 13 L13 6.4 M9.6 13 L13 9.6" stroke="#a8a8a8" stroke-width="1.1"/></svg>
</body></html>
